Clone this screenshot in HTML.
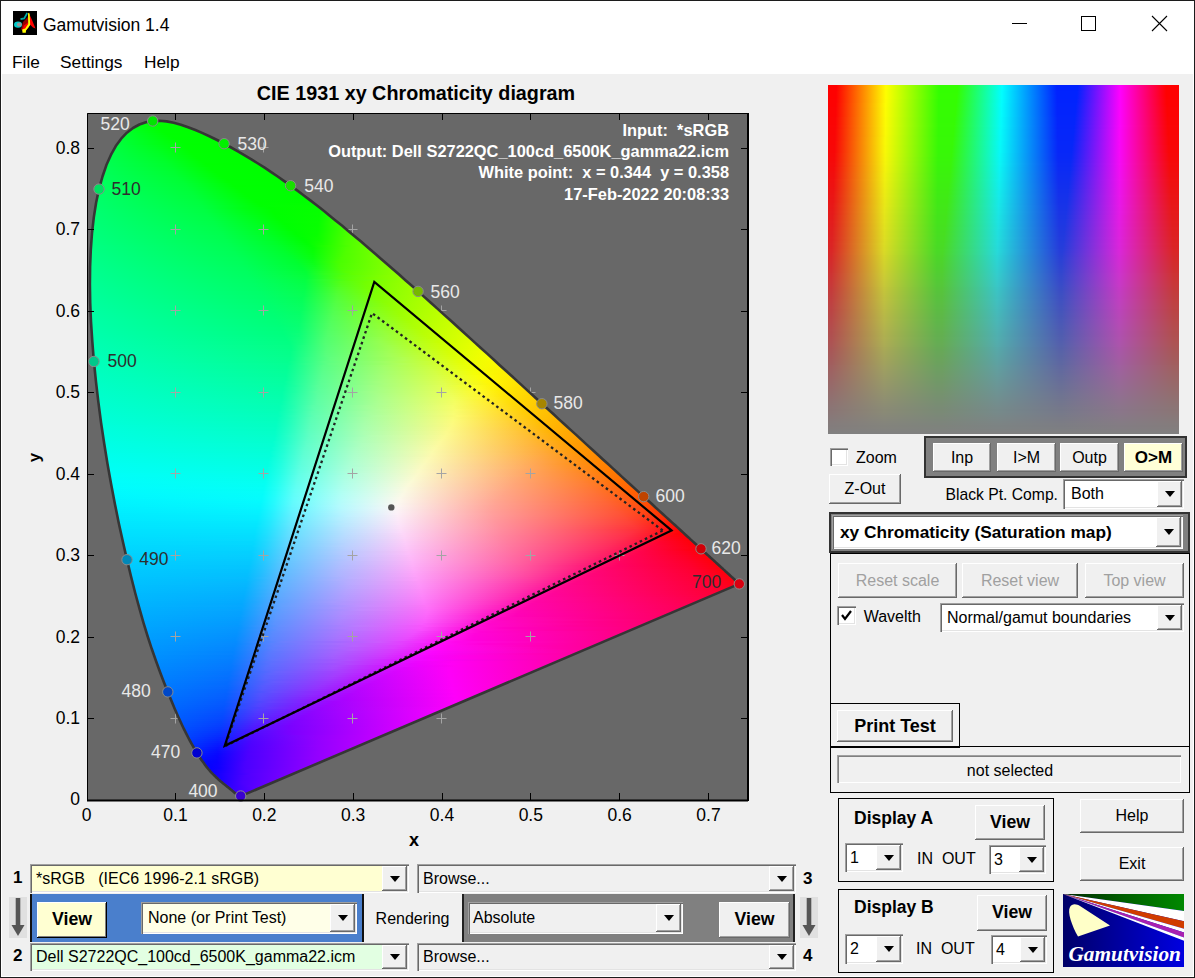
<!DOCTYPE html><html><head><meta charset="utf-8"><style>
*{margin:0;padding:0;box-sizing:border-box}
html,body{width:1195px;height:978px;overflow:hidden;background:#f0f0f0;font-family:"Liberation Sans",sans-serif;position:relative}
div,svg{position:absolute}
.t{white-space:pre;line-height:1.117;color:#000}
.btn{background:#f0f0f0;box-shadow:inset -1px -1px #696969,inset 1px 1px #fff,inset -2px -2px #a0a0a0}
.cmb{box-shadow:inset 1px 1px #a0a0a0,inset 2px 2px #696969,inset -1px -1px #fff,inset -2px -2px #e3e3e3}
.sunk{box-shadow:inset 1px 1px #a0a0a0,inset -1px -1px #fff}
.a{fill:#000}
.frm{border:1px solid #000}
.hs b{position:absolute;display:block;height:2px}
.sw b{position:absolute;display:block;left:0;width:351px}
</style></head><body>
<div class="" style="left:0px;top:0px;width:1195px;height:74px;background:#fff"></div>
<div class="t" style="left:43.0px;top:15.6px;font-size:17.5px;">Gamutvision 1.4</div>
<svg style="left:13px;top:11px" width="24" height="24" viewBox="0 0 24 24"><rect width="24" height="24" fill="#000"/><path d="M8 18.5L10 11L15 6L16 14L12 19.5Z" fill="#900"/><path d="M9 19.5L11 14.5L15 11.5L16 16L12 20.5Z" fill="#f00"/><path d="M15.5 1.5L19 9L22.5 17.5L20 16.5L16.5 13Z" fill="#f00"/><path d="M15 2L16.6 2.5L17.2 14L13 19.5L12.8 21.8L9.5 21.8L9.2 18.6L12.2 17.6L15.2 13Z" fill="#ff0"/><ellipse cx="5" cy="13.6" rx="4" ry="3.2" fill="#0cc"/><ellipse cx="6.3" cy="13.6" rx="2.4" ry="2" fill="#999"/><path d="M7.5 8.2L11.2 7.4L14.2 2" stroke="#0aa" stroke-width="1.7" fill="none"/></svg>
<div class="" style="left:1012px;top:23px;width:15px;height:1px;background:#000"></div>
<div class="" style="left:1081px;top:16px;width:15px;height:15px;border:1px solid #000"></div>
<svg style="left:1151px;top:15px" width="17" height="17"><path d="M1 1L16 16M16 1L1 16" stroke="#000" stroke-width="1.1"/></svg>
<div class="t" style="left:12.0px;top:52.8px;font-size:17.3px;">File</div>
<div class="t" style="left:60.0px;top:52.8px;font-size:17.3px;">Settings</div>
<div class="t" style="left:144.0px;top:52.8px;font-size:17.3px;">Help</div>
<div style="left:87px;top:113px;width:662px;height:688px;background:#686868"></div>
<svg style="left:0;top:0" width="1195" height="978"><path d="M258.5 147.5h10M263.5 142.5v10M347.5 229.5h10M352.5 224.5v10M436.5 310.5h10M441.5 305.5v10M525.5 392.5h10M530.5 387.5v10M436.5 718.5h10M441.5 713.5v10M170.5 718.5h10M175.5 713.5v10" stroke="#a4a4a4" stroke-width="1" fill="none"/></svg>
<div class="hs" style="left:0;top:0;width:1195px;height:978px;clip-path:path('M241.3 795.9 L241.3 795.9 L241.3 795.9 L241.3 795.9 L241.3 795.9 L241.2 795.9 L241.2 795.9 L241.2 795.9 L241.1 795.9 L241.1 795.9 L241.1 795.9 L241.0 795.9 L241.0 795.9 L240.9 795.9 L240.9 795.9 L240.8 795.9 L240.8 795.9 L240.8 796.0 L240.7 796.0 L240.7 796.0 L240.7 796.0 L240.6 796.0 L240.6 796.0 L240.5 796.0 L240.4 796.0 L240.4 796.0 L240.3 796.0 L240.2 796.0 L240.1 796.0 L240.1 796.0 L240.0 796.0 L239.9 796.0 L239.8 796.0 L239.7 796.0 L239.6 796.0 L239.5 796.0 L239.4 796.0 L239.3 795.9 L239.2 795.9 L239.1 795.9 L238.9 795.8 L238.8 795.7 L238.6 795.6 L238.4 795.5 L238.2 795.4 L238.0 795.2 L237.7 795.1 L237.5 794.9 L237.2 794.7 L237.0 794.5 L236.7 794.3 L236.4 794.1 L236.0 793.8 L235.7 793.6 L235.3 793.3 L234.9 793.0 L234.5 792.6 L234.1 792.3 L233.7 791.9 L233.2 791.5 L232.7 791.1 L232.2 790.7 L231.7 790.2 L231.1 789.7 L230.4 789.2 L229.8 788.7 L229.1 788.1 L228.3 787.5 L227.5 786.9 L226.7 786.2 L225.8 785.5 L224.9 784.8 L223.9 784.0 L222.9 783.2 L221.9 782.3 L220.8 781.4 L219.6 780.4 L218.4 779.4 L217.2 778.2 L215.9 777.0 L214.6 775.7 L213.2 774.4 L211.7 772.9 L210.3 771.3 L208.7 769.5 L207.0 767.5 L205.3 765.2 L203.4 762.6 L201.3 759.7 L199.2 756.4 L196.9 752.9 L194.6 749.0 L192.1 744.7 L189.5 740.0 L186.9 734.9 L184.0 729.2 L181.1 723.0 L178.0 716.2 L174.7 708.7 L171.3 700.6 L167.8 691.9 L164.0 682.4 L160.1 672.2 L156.1 661.2 L151.9 649.3 L147.7 636.5 L143.5 622.8 L139.4 608.4 L135.2 593.0 L131.1 576.8 L127.0 559.7 L122.9 541.8 L118.8 523.2 L114.9 503.9 L111.1 484.0 L107.5 463.9 L104.2 443.5 L101.1 423.0 L98.4 402.4 L96.0 381.9 L93.9 361.5 L92.3 341.4 L91.0 321.8 L90.2 302.8 L89.9 284.5 L90.1 266.7 L90.8 249.6 L92.0 233.1 L93.8 217.4 L96.1 202.7 L99.0 189.1 L102.5 176.5 L106.4 165.1 L110.9 154.9 L115.8 146.1 L121.2 138.7 L126.9 132.7 L133.0 128.0 L139.4 124.5 L145.9 122.2 L152.7 121.0 L159.6 120.7 L166.6 121.4 L173.7 122.8 L180.9 124.7 L188.1 127.2 L195.4 130.0 L202.6 133.1 L209.9 136.5 L217.1 140.0 L224.1 143.7 L231.1 147.5 L237.9 151.3 L244.7 155.3 L251.4 159.3 L258.0 163.5 L264.6 167.7 L271.2 172.1 L277.7 176.5 L284.2 181.1 L290.6 185.7 L297.1 190.4 L303.5 195.2 L310.0 200.1 L316.4 205.1 L322.8 210.1 L329.1 215.2 L335.5 220.4 L341.9 225.6 L348.2 230.9 L354.6 236.2 L361.0 241.6 L367.3 247.0 L373.7 252.4 L380.0 257.9 L386.4 263.4 L392.7 269.0 L399.1 274.6 L405.4 280.2 L411.8 285.8 L418.1 291.4 L424.5 297.1 L430.8 302.8 L437.1 308.4 L443.4 314.1 L449.8 319.8 L456.1 325.5 L462.4 331.2 L468.6 336.9 L474.9 342.6 L481.1 348.2 L487.4 353.9 L493.6 359.5 L499.7 365.2 L505.9 370.8 L512.0 376.3 L518.1 381.9 L524.1 387.4 L530.1 392.9 L536.0 398.3 L541.9 403.7 L547.8 409.0 L553.6 414.3 L559.3 419.6 L565.0 424.8 L570.6 429.9 L576.2 434.9 L581.6 439.9 L587.0 444.9 L592.4 449.7 L597.6 454.5 L602.7 459.2 L607.8 463.8 L612.8 468.4 L617.6 472.8 L622.3 477.1 L626.8 481.2 L631.2 485.2 L635.5 489.1 L639.6 492.9 L643.7 496.6 L647.7 500.3 L651.6 503.8 L655.3 507.3 L659.0 510.6 L662.5 513.8 L665.9 516.9 L669.1 519.8 L672.2 522.6 L675.2 525.3 L678.1 527.9 L680.9 530.5 L683.5 532.9 L686.0 535.2 L688.5 537.4 L690.8 539.6 L693.0 541.6 L695.1 543.5 L697.2 545.4 L699.1 547.2 L701.0 548.8 L702.7 550.5 L704.4 552.0 L706.0 553.5 L707.6 554.9 L709.0 556.2 L710.4 557.5 L711.8 558.7 L713.1 559.9 L714.3 561.0 L715.5 562.1 L716.7 563.2 L717.8 564.2 L718.9 565.2 L720.0 566.2 L721.0 567.1 L721.9 568.0 L722.9 568.8 L723.7 569.6 L724.6 570.4 L725.4 571.2 L726.2 571.9 L726.9 572.6 L727.6 573.2 L728.3 573.8 L729.0 574.4 L729.6 575.0 L730.1 575.5 L730.6 575.9 L731.1 576.4 L731.6 576.8 L732.0 577.2 L732.5 577.6 L732.9 578.0 L733.3 578.3 L733.6 578.7 L734.0 579.0 L734.3 579.3 L734.6 579.6 L734.9 579.8 L735.1 580.0 L735.4 580.3 L735.6 580.5 L735.8 580.6 L735.9 580.8 L736.1 581.0 L736.3 581.1 L736.5 581.3 L736.6 581.4 L736.8 581.6 L736.9 581.7 L737.1 581.8 L737.2 581.9 L737.3 582.1 L737.4 582.2 L737.6 582.3 L737.7 582.4 L737.8 582.5 L737.9 582.6 L738.1 582.7 L738.2 582.9 L738.3 583.0 L738.4 583.1 L738.5 583.2 L738.6 583.3 L738.7 583.4 L738.8 583.4 L738.9 583.5 L739.0 583.6 L739.0 583.6 L739.1 583.6 L739.1 583.7 L739.1 583.7 L739.2 583.8 L739.2 583.8 L739.2 583.8 L739.3 583.8 L739.3 583.9 L739.3 583.9 L739.3 583.9 L739.3 583.9 Z')"><b style="top:119px;left:150px;width:16px;background:linear-gradient(90deg,#00ff02 0px,#00ff00 15px)"></b><b style="top:121px;left:141px;width:37px;background:linear-gradient(90deg,#00ff08 0px,#00ff00 35px,#00ff00 36px)"></b><b style="top:123px;left:136px;width:49px;background:linear-gradient(90deg,#00ff10 0px,#00ff00 31px,#00ff00 48px)"></b><b style="top:125px;left:132px;width:59px;background:linear-gradient(90deg,#00ff18 0px,#00ff01 29px,#00ff00 58px)"></b><b style="top:127px;left:129px;width:67px;background:linear-gradient(90deg,#00ff20 0px,#00ff02 31px,#00ff00 66px)"></b><b style="top:129px;left:127px;width:74px;background:linear-gradient(90deg,#00ff25 0px,#00ff02 35px,#00ff00 72px,#00ff00 73px)"></b><b style="top:131px;left:124px;width:82px;background:linear-gradient(90deg,#00ff2b 0px,#00ff03 39px,#00ff00 80px,#00ff00 81px)"></b><b style="top:133px;left:122px;width:88px;background:linear-gradient(90deg,#00ff30 0px,#00ff02 45px,#00ff00 86px,#00ff00 87px)"></b><b style="top:135px;left:120px;width:94px;background:linear-gradient(90deg,#00ff34 0px,#00ff03 49px,#00ff00 92px,#00ff00 93px)"></b><b style="top:137px;left:118px;width:100px;background:linear-gradient(90deg,#00ff37 0px,#00ff02 55px,#00ff00 98px,#00ff00 99px)"></b><b style="top:139px;left:117px;width:105px;background:linear-gradient(90deg,#00ff3a 0px,#00ff02 59px,#00ff00 104px)"></b><b style="top:141px;left:116px;width:110px;background:linear-gradient(90deg,#00ff3c 0px,#00ff02 63px,#00ff00 108px,#00ff00 109px)"></b><b style="top:143px;left:114px;width:116px;background:linear-gradient(90deg,#00ff3f 0px,#00ff17 43px,#00ff01 72px,#00ff00 115px)"></b><b style="top:145px;left:113px;width:121px;background:linear-gradient(90deg,#00ff42 0px,#00ff1c 43px,#00ff02 72px,#00ff00 119px,#00ff00 120px)"></b><b style="top:147px;left:112px;width:125px;background:linear-gradient(90deg,#00ff44 0px,#00ff1e 45px,#00ff02 74px,#00ff00 123px,#00ff00 124px)"></b><b style="top:149px;left:111px;width:130px;background:linear-gradient(90deg,#00ff46 0px,#00ff20 47px,#00ff02 78px,#00ff00 129px)"></b><b style="top:151px;left:109px;width:135px;background:linear-gradient(90deg,#00ff48 0px,#00ff23 49px,#00ff02 82px,#00ff00 133px,#00ff00 134px)"></b><b style="top:153px;left:108px;width:140px;background:linear-gradient(90deg,#00ff4a 0px,#00ff25 51px,#00ff03 84px,#00ff00 139px)"></b><b style="top:155px;left:107px;width:144px;background:linear-gradient(90deg,#00ff4c 0px,#00ff25 55px,#00ff03 88px,#00ff00 143px)"></b><b style="top:157px;left:107px;width:147px;background:linear-gradient(90deg,#00ff4d 0px,#00ff28 55px,#00ff03 90px,#00ff00 145px,#00ff00 146px)"></b><b style="top:159px;left:106px;width:152px;background:linear-gradient(90deg,#00ff4f 0px,#00ff28 59px,#00ff03 94px,#00ff00 151px)"></b><b style="top:161px;left:105px;width:156px;background:linear-gradient(90deg,#00ff51 0px,#00ff2a 61px,#00ff03 98px,#00ff00 155px)"></b><b style="top:163px;left:104px;width:160px;background:linear-gradient(90deg,#00ff53 0px,#00ff2c 63px,#00ff02 102px,#00ff00 159px)"></b><b style="top:165px;left:103px;width:164px;background:linear-gradient(90deg,#00ff54 0px,#00ff2b 67px,#00ff03 104px,#00ff00 163px)"></b><b style="top:167px;left:103px;width:167px;background:linear-gradient(90deg,#00ff56 0px,#00ff2e 67px,#00ff03 108px,#00ff00 165px,#00ff00 166px)"></b><b style="top:169px;left:102px;width:171px;background:linear-gradient(90deg,#00ff57 0px,#00ff2e 71px,#00ff03 110px,#00ff00 169px,#00ff00 170px)"></b><b style="top:171px;left:101px;width:175px;background:linear-gradient(90deg,#00ff59 0px,#00ff30 73px,#00ff03 114px,#00ff00 173px,#00ff00 174px)"></b><b style="top:173px;left:100px;width:179px;background:linear-gradient(90deg,#00ff5a 0px,#00ff31 75px,#00ff03 118px,#00ff00 177px,#00ff00 178px)"></b><b style="top:175px;left:100px;width:182px;background:linear-gradient(90deg,#00ff5c 0px,#00ff32 77px,#00ff03 120px,#00ff00 181px)"></b><b style="top:177px;left:99px;width:186px;background:linear-gradient(90deg,#00ff5d 0px,#00ff34 79px,#00ff03 124px,#00ff00 185px)"></b><b style="top:179px;left:99px;width:189px;background:linear-gradient(90deg,#00ff5e 0px,#00ff34 81px,#00ff02 128px,#00ff00 187px,#00ff00 188px)"></b><b style="top:181px;left:98px;width:192px;background:linear-gradient(90deg,#00ff60 0px,#00ff34 85px,#00ff03 130px,#00ff00 191px)"></b><b style="top:183px;left:98px;width:195px;background:linear-gradient(90deg,#00ff61 0px,#00ff35 87px,#00ff03 134px,#00ff00 193px,#00ff00 194px)"></b><b style="top:185px;left:97px;width:199px;background:linear-gradient(90deg,#00ff62 0px,#00ff36 89px,#00ff02 138px,#00ff00 197px,#00ff00 198px)"></b><b style="top:187px;left:97px;width:202px;background:linear-gradient(90deg,#00ff64 0px,#00ff37 91px,#00ff03 140px,#00ff00 201px)"></b><b style="top:189px;left:96px;width:205px;background:linear-gradient(90deg,#00ff65 0px,#00ff38 93px,#00ff03 144px,#00ff00 203px,#00ff00 204px)"></b><b style="top:191px;left:96px;width:208px;background:linear-gradient(90deg,#00ff66 0px,#00ff39 95px,#00ff03 146px,#00ff00 207px)"></b><b style="top:193px;left:95px;width:212px;background:linear-gradient(90deg,#00ff67 0px,#00ff3a 97px,#00ff03 150px,#00ff00 211px)"></b><b style="top:195px;left:95px;width:214px;background:linear-gradient(90deg,#00ff69 0px,#00ff3b 99px,#00ff03 152px,#00ff00 213px)"></b><b style="top:197px;left:94px;width:218px;background:linear-gradient(90deg,#00ff6a 0px,#00ff3c 101px,#00ff03 156px,#00ff00 217px)"></b><b style="top:199px;left:94px;width:221px;background:linear-gradient(90deg,#00ff6b 0px,#00ff3d 103px,#00ff02 160px,#01ff00 219px,#01ff00 220px)"></b><b style="top:201px;left:94px;width:223px;background:linear-gradient(90deg,#00ff6c 0px,#00ff3e 105px,#00ff02 162px,#01ff00 221px,#02ff00 222px)"></b><b style="top:203px;left:93px;width:227px;background:linear-gradient(90deg,#00ff6d 0px,#00ff3f 107px,#00ff02 166px,#03ff00 225px,#04ff00 226px)"></b><b style="top:205px;left:93px;width:229px;background:linear-gradient(90deg,#00ff6e 0px,#00ff40 109px,#00ff03 168px,#05ff00 227px,#06ff00 228px)"></b><b style="top:207px;left:93px;width:232px;background:linear-gradient(90deg,#00ff6f 0px,#00ff42 109px,#00ff15 150px,#00ff01 177px,#07ff00 228px,#0bff00 231px)"></b><b style="top:209px;left:92px;width:235px;background:linear-gradient(90deg,#00ff71 0px,#00ff42 113px,#00ff15 154px,#00ff01 181px,#06ff00 228px,#0eff00 233px,#10ff00 234px)"></b><b style="top:211px;left:92px;width:238px;background:linear-gradient(90deg,#00ff72 0px,#00ff43 113px,#00ff18 154px,#00ff01 181px,#06ff00 228px,#18ff00 237px)"></b><b style="top:213px;left:92px;width:240px;background:linear-gradient(90deg,#00ff73 0px,#00ff44 115px,#00ff19 156px,#00ff01 183px,#07ff00 228px,#1fff00 239px)"></b><b style="top:215px;left:91px;width:244px;background:linear-gradient(90deg,#00ff74 0px,#00ff45 117px,#00ff1c 158px,#00ff02 185px,#06ff00 228px,#28ff00 243px)"></b><b style="top:217px;left:91px;width:246px;background:linear-gradient(90deg,#00ff75 0px,#00ff46 119px,#00ff1d 160px,#00ff02 187px,#07ff00 228px,#2eff00 245px)"></b><b style="top:219px;left:91px;width:249px;background:linear-gradient(90deg,#00ff76 0px,#00ff46 121px,#00ff1e 162px,#00ff02 189px,#07ff00 228px,#34ff00 247px,#36ff00 248px)"></b><b style="top:221px;left:91px;width:251px;background:linear-gradient(90deg,#00ff77 0px,#00ff47 123px,#00ff1f 164px,#00ff03 191px,#08ff00 228px,#39ff00 249px,#3bff00 250px)"></b><b style="top:223px;left:90px;width:255px;background:linear-gradient(90deg,#00ff78 0px,#00ff48 125px,#00ff21 166px,#00ff02 195px,#07ff00 228px,#40ff00 253px,#42ff00 254px)"></b><b style="top:225px;left:90px;width:257px;background:linear-gradient(90deg,#00ff79 0px,#00ff4a 125px,#00ff22 168px,#00ff03 197px,#07ff00 228px,#44ff00 255px,#46ff00 256px)"></b><b style="top:227px;left:90px;width:259px;background:linear-gradient(90deg,#00ff7a 0px,#00ff4b 127px,#00ff23 170px,#00ff03 199px,#08ff00 228px,#48ff00 257px,#4aff00 258px)"></b><b style="top:229px;left:90px;width:262px;background:linear-gradient(90deg,#00ff7b 0px,#00ff4b 129px,#00ff24 172px,#00ff03 201px,#08ff00 228px,#4cff00 259px,#4eff00 260px,#4fff00 261px)"></b><b style="top:231px;left:90px;width:264px;background:linear-gradient(90deg,#00ff7c 0px,#00ff4c 131px,#00ff25 174px,#00ff03 205px,#09ff00 228px,#4dff00 259px,#51ff00 262px,#53ff00 263px)"></b><b style="top:233px;left:89px;width:268px;background:linear-gradient(90deg,#00ff7d 0px,#00ff4d 133px,#00ff24 178px,#00ff03 207px,#08ff00 228px,#4cff00 259px,#56ff00 266px,#57ff00 267px)"></b><b style="top:235px;left:89px;width:270px;background:linear-gradient(90deg,#00ff7e 0px,#00ff4f 133px,#00ff28 178px,#00ff04 209px,#09ff00 228px,#4dff00 259px,#59ff00 268px,#5aff00 269px)"></b><b style="top:237px;left:89px;width:272px;background:linear-gradient(90deg,#00ff7f 0px,#00ff4f 135px,#00ff29 180px,#00ff03 213px,#0dff00 230px,#4bff00 257px,#5cff00 270px,#5dff00 271px)"></b><b style="top:239px;left:89px;width:275px;background:linear-gradient(90deg,#00ff80 0px,#00ff50 137px,#00ff27 184px,#00ff03 215px,#0eff00 230px,#4bff00 257px,#61ff00 274px)"></b><b style="top:241px;left:89px;width:277px;background:linear-gradient(90deg,#00ff81 0px,#00ff51 137px,#00ff2b 184px,#01ff03 217px,#13ff00 232px,#4cff00 257px,#64ff00 276px)"></b><b style="top:243px;left:89px;width:279px;background:linear-gradient(90deg,#00ff82 0px,#00ff52 139px,#00ff29 188px,#02ff04 219px,#19ff00 234px,#4dff00 257px,#67ff00 278px)"></b><b style="top:245px;left:88px;width:283px;background:linear-gradient(90deg,#00ff84 0px,#00ff53 141px,#00ff2c 190px,#04ff04 223px,#28ff00 240px,#57ff00 265px,#6bff00 282px)"></b><b style="top:247px;left:88px;width:285px;background:linear-gradient(90deg,#00ff85 0px,#00ff54 143px,#00ff2d 192px,#06ff04 225px,#4eff00 258px,#6dff00 283px,#6eff00 284px)"></b><b style="top:249px;left:88px;width:287px;background:linear-gradient(90deg,#00ff85 0px,#00ff55 143px,#00ff2d 194px,#07ff06 225px,#4fff00 258px,#6fff00 285px,#70ff00 286px)"></b><b style="top:251px;left:88px;width:290px;background:linear-gradient(90deg,#00ff86 0px,#00ff56 145px,#00ff2e 196px,#08ff07 225px,#50ff00 258px,#74ff00 289px)"></b><b style="top:253px;left:88px;width:292px;background:linear-gradient(90deg,#00ff87 0px,#00ff56 147px,#00ff2f 198px,#08ff0a 225px,#4dff00 256px,#76ff00 291px)"></b><b style="top:255px;left:88px;width:294px;background:linear-gradient(90deg,#00ff88 0px,#00ff57 149px,#00ff2e 202px,#09ff0d 225px,#4eff00 256px,#79ff00 293px)"></b><b style="top:257px;left:88px;width:297px;background:linear-gradient(90deg,#00ff89 0px,#00ff59 149px,#00ff31 202px,#09ff10 225px,#4cff00 254px,#7bff00 295px,#7cff00 296px)"></b><b style="top:259px;left:88px;width:299px;background:linear-gradient(90deg,#00ff8a 0px,#00ff59 151px,#00ff30 206px,#0aff14 225px,#49ff01 252px,#7eff00 297px,#7fff00 298px)"></b><b style="top:261px;left:88px;width:301px;background:linear-gradient(90deg,#00ff8b 0px,#00ff5a 153px,#00ff30 208px,#0bff17 225px,#47ff01 250px,#80ff00 299px,#81ff00 300px)"></b><b style="top:263px;left:88px;width:304px;background:linear-gradient(90deg,#00ff8c 0px,#00ff5b 153px,#00ff31 210px,#0fff18 227px,#4bff02 252px,#84ff00 303px)"></b><b style="top:265px;left:88px;width:306px;background:linear-gradient(90deg,#00ff8d 0px,#00ff5c 155px,#01ff32 212px,#10ff1d 227px,#4cff02 252px,#87ff00 305px)"></b><b style="top:267px;left:88px;width:308px;background:linear-gradient(90deg,#00ff8e 0px,#00ff5e 155px,#01ff33 214px,#16ff1e 229px,#4cff04 252px,#89ff00 307px)"></b><b style="top:269px;left:88px;width:310px;background:linear-gradient(90deg,#00ff8f 0px,#00ff5e 157px,#02ff34 216px,#1dff1f 231px,#50ff04 254px,#8cff00 309px)"></b><b style="top:271px;left:88px;width:313px;background:linear-gradient(90deg,#00ff90 0px,#00ff5f 159px,#04ff35 218px,#29ff1d 235px,#57ff03 258px,#8eff00 311px,#8fff00 312px)"></b><b style="top:273px;left:88px;width:315px;background:linear-gradient(90deg,#00ff91 0px,#00ff60 159px,#04ff38 218px,#30ff1e 237px,#5fff02 264px,#90ff00 313px,#91ff00 314px)"></b><b style="top:275px;left:87px;width:318px;background:linear-gradient(90deg,#00ff92 0px,#00ff61 161px,#06ff3a 220px,#52ff0a 255px,#81ff00 296px,#93ff00 317px)"></b><b style="top:277px;left:87px;width:321px;background:linear-gradient(90deg,#00ff93 0px,#00ff62 163px,#06ff3d 220px,#50ff0f 253px,#74ff00 282px,#96ff00 319px,#97ff00 320px)"></b><b style="top:279px;left:87px;width:323px;background:linear-gradient(90deg,#00ff94 0px,#00ff63 165px,#05ff42 218px,#30ff2c 237px,#60ff07 264px,#98ff00 321px,#99ff00 322px)"></b><b style="top:281px;left:87px;width:325px;background:linear-gradient(90deg,#00ff95 0px,#00ff64 165px,#05ff44 218px,#52ff17 253px,#71ff01 278px,#9aff00 323px,#9bff00 324px)"></b><b style="top:283px;left:87px;width:327px;background:linear-gradient(90deg,#00ff96 0px,#00ff65 167px,#05ff47 218px,#52ff1b 253px,#72ff02 278px,#9dff00 325px,#9dff00 326px)"></b><b style="top:285px;left:87px;width:330px;background:linear-gradient(90deg,#00ff97 0px,#00ff66 167px,#06ff49 218px,#53ff1f 253px,#74ff02 280px,#a1ff00 329px)"></b><b style="top:287px;left:87px;width:332px;background:linear-gradient(90deg,#00ff98 0px,#00ff67 169px,#06ff4b 218px,#51ff27 251px,#75ff03 280px,#a3ff00 331px)"></b><b style="top:289px;left:87px;width:334px;background:linear-gradient(90deg,#00ff99 0px,#00ff67 171px,#07ff4d 218px,#52ff2b 251px,#78ff04 282px,#a5ff00 333px)"></b><b style="top:291px;left:88px;width:335px;background:linear-gradient(90deg,#00ff99 0px,#00ff69 171px,#06ff50 216px,#54ff2e 251px,#79ff04 282px,#a7ff00 333px,#a7ff00 334px)"></b><b style="top:293px;left:88px;width:338px;background:linear-gradient(90deg,#00ff9a 0px,#00ff69 173px,#07ff52 216px,#52ff34 249px,#7cff05 284px,#aaff00 337px)"></b><b style="top:295px;left:88px;width:340px;background:linear-gradient(90deg,#00ff9b 0px,#00ff6b 173px,#07ff54 216px,#52ff38 249px,#81ff04 288px,#adff00 339px)"></b><b style="top:297px;left:88px;width:342px;background:linear-gradient(90deg,#00ff9c 0px,#00ff6b 175px,#05ff57 214px,#53ff3b 249px,#83ff04 290px,#afff00 341px)"></b><b style="top:299px;left:88px;width:344px;background:linear-gradient(90deg,#00ff9d 0px,#00ff6d 175px,#06ff59 214px,#54ff3e 249px,#86ff05 292px,#b1ff00 343px)"></b><b style="top:301px;left:88px;width:347px;background:linear-gradient(90deg,#00ff9e 0px,#00ff6d 177px,#06ff5b 214px,#55ff41 249px,#8aff04 296px,#b4ff00 345px,#b4ff00 346px)"></b><b style="top:303px;left:88px;width:349px;background:linear-gradient(90deg,#00ff9f 0px,#00ff6e 179px,#07ff5d 214px,#52ff46 247px,#8fff03 300px,#b6ff00 347px,#b7ff00 348px)"></b><b style="top:305px;left:88px;width:351px;background:linear-gradient(90deg,#00ffa0 0px,#00ff70 179px,#07ff5f 214px,#53ff48 247px,#91ff04 302px,#b8ff00 349px,#b9ff00 350px)"></b><b style="top:307px;left:88px;width:353px;background:linear-gradient(90deg,#00ffa1 0px,#00ff70 181px,#08ff61 214px,#54ff4b 247px,#81ff1b 284px,#98ff02 309px,#bbff00 352px)"></b><b style="top:309px;left:88px;width:355px;background:linear-gradient(90deg,#00ffa2 0px,#00ff72 181px,#08ff62 214px,#51ff4f 245px,#7fff23 282px,#97ff04 307px,#beff00 354px)"></b><b style="top:311px;left:88px;width:358px;background:linear-gradient(90deg,#00ffa3 0px,#00ff72 183px,#06ff65 212px,#55ff50 247px,#82ff24 284px,#9bff03 311px,#c0ff00 356px,#c1ff00 357px)"></b><b style="top:313px;left:88px;width:360px;background:linear-gradient(90deg,#00ffa4 0px,#00ff73 185px,#06ff67 212px,#53ff53 245px,#83ff29 284px,#9cff04 311px,#c2ff00 358px,#c3ff00 359px)"></b><b style="top:315px;left:88px;width:362px;background:linear-gradient(90deg,#00ffa5 0px,#00ff74 185px,#07ff69 212px,#54ff56 245px,#83ff2d 284px,#9eff05 313px,#c5ff00 360px,#c5ff00 361px)"></b><b style="top:317px;left:88px;width:364px;background:linear-gradient(90deg,#00ffa6 0px,#00ff75 187px,#08ff6a 212px,#55ff58 245px,#86ff2e 286px,#a3ff04 317px,#c7ff00 362px,#c8ff00 363px)"></b><b style="top:319px;left:88px;width:367px;background:linear-gradient(90deg,#00ffa7 0px,#00ff77 187px,#08ff6c 212px,#52ff5b 243px,#87ff33 286px,#a5ff04 319px,#cbff00 366px)"></b><b style="top:321px;left:88px;width:369px;background:linear-gradient(90deg,#00ffa8 0px,#00ff77 189px,#09ff6d 212px,#53ff5d 243px,#89ff34 288px,#a7ff05 321px,#cdff00 368px)"></b><b style="top:323px;left:89px;width:370px;background:linear-gradient(90deg,#00ffa8 0px,#00ff78 189px,#08ff70 210px,#52ff60 241px,#8bff36 288px,#abff05 323px,#cfff00 368px,#d0ff00 369px)"></b><b style="top:325px;left:89px;width:372px;background:linear-gradient(90deg,#00ffa9 0px,#00ff79 191px,#08ff71 210px,#53ff61 241px,#8eff37 290px,#adff05 325px,#d1ff00 370px,#d2ff00 371px)"></b><b style="top:327px;left:89px;width:374px;background:linear-gradient(90deg,#00ffaa 0px,#00ff7b 191px,#09ff73 210px,#54ff63 241px,#90ff38 292px,#b0ff05 327px,#d4ff00 372px,#d4ff00 373px)"></b><b style="top:329px;left:89px;width:377px;background:linear-gradient(90deg,#00ffab 0px,#00ff7b 193px,#0aff74 210px,#51ff66 239px,#91ff3c 292px,#b4ff05 331px,#d8ff00 376px)"></b><b style="top:331px;left:89px;width:379px;background:linear-gradient(90deg,#00ffac 0px,#00ff7d 193px,#0aff76 210px,#52ff68 239px,#94ff3d 294px,#b6ff05 333px,#daff00 378px)"></b><b style="top:333px;left:89px;width:381px;background:linear-gradient(90deg,#00ffad 0px,#00ff7d 195px,#0fff77 212px,#53ff6a 239px,#96ff3e 296px,#b9ff05 335px,#dcff00 380px)"></b><b style="top:335px;left:89px;width:383px;background:linear-gradient(90deg,#00ffae 0px,#00ff7f 195px,#0cff79 210px,#54ff6c 239px,#99ff3f 298px,#bbff06 337px,#dfff00 382px)"></b><b style="top:337px;left:89px;width:385px;background:linear-gradient(90deg,#00ffaf 0px,#01ff80 197px,#11ff7a 212px,#51ff6f 237px,#94ff49 292px,#bfff05 341px,#e1ff00 384px)"></b><b style="top:339px;left:90px;width:387px;background:linear-gradient(90deg,#00ffb0 0px,#01ff81 197px,#15ff7b 212px,#50ff71 235px,#94ff4d 290px,#b5ff17 327px,#c8ff02 350px,#e4ff00 385px,#e5ff00 386px)"></b><b style="top:341px;left:90px;width:389px;background:linear-gradient(90deg,#00ffb1 0px,#02ff82 199px,#16ff7c 212px,#51ff72 235px,#95ff50 290px,#b4ff20 325px,#c7ff03 348px,#e6ff00 387px,#e7ff00 388px)"></b><b style="top:343px;left:90px;width:391px;background:linear-gradient(90deg,#00ffb2 0px,#02ff83 199px,#17ff7e 212px,#52ff74 235px,#97ff51 292px,#b7ff21 327px,#ccff03 352px,#e9ff00 389px,#eaff00 390px)"></b><b style="top:345px;left:90px;width:393px;background:linear-gradient(90deg,#00ffb3 0px,#04ff84 201px,#24ff7e 216px,#56ff75 237px,#9eff4e 298px,#bdff1b 333px,#d0ff02 356px,#ecff00 391px,#ecff00 392px)"></b><b style="top:347px;left:90px;width:395px;background:linear-gradient(90deg,#00ffb4 0px,#04ff85 201px,#25ff80 216px,#57ff77 237px,#a0ff4f 300px,#bfff1c 335px,#d2ff02 358px,#eeff00 393px,#efff00 394px)"></b><b style="top:349px;left:90px;width:398px;background:linear-gradient(90deg,#00ffb5 0px,#04ff87 201px,#26ff81 216px,#58ff78 237px,#a1ff52 300px,#beff25 333px,#d3ff04 358px,#f2ff00 397px)"></b><b style="top:351px;left:91px;width:399px;background:linear-gradient(90deg,#00ffb6 0px,#04ff89 199px,#25ff83 214px,#57ff7a 235px,#9fff57 296px,#beff2c 331px,#d5ff05 358px,#f4ff00 397px,#f5ff00 398px)"></b><b style="top:353px;left:91px;width:401px;background:linear-gradient(90deg,#00ffb7 0px,#04ff8a 199px,#26ff85 214px,#58ff7c 235px,#a2ff58 298px,#c1ff2d 333px,#d7ff05 360px,#f6fe00 399px,#f7fe00 400px)"></b><b style="top:355px;left:91px;width:403px;background:linear-gradient(90deg,#00ffb8 0px,#05ff8b 199px,#27ff86 214px,#59ff7e 235px,#a3ff5a 298px,#c2ff32 333px,#daff05 362px,#f8fe00 401px,#f9fe00 402px)"></b><b style="top:357px;left:91px;width:405px;background:linear-gradient(90deg,#00ffb9 0px,#05ff8d 199px,#2fff87 216px,#60ff7e 239px,#b0ff51 312px,#cdff21 345px,#e0ff03 368px,#fafd00 403px,#fbfd00 404px)"></b><b style="top:359px;left:91px;width:408px;background:linear-gradient(90deg,#00ffba 0px,#05ff8e 199px,#30ff88 216px,#61ff7f 239px,#b1ff54 312px,#ceff26 345px,#e3ff04 370px,#fdfb00 407px)"></b><b style="top:361px;left:91px;width:410px;background:linear-gradient(90deg,#00ffbb 0px,#04ff90 197px,#25ff8b 212px,#58ff84 233px,#a1ff64 294px,#c8ff39 337px,#e4ff05 370px,#fef900 409px)"></b><b style="top:363px;left:92px;width:411px;background:linear-gradient(90deg,#00ffbc 0px,#05ff92 197px,#30ff8c 214px,#61ff83 237px,#b2ff5a 310px,#d1ff2e 345px,#e7ff05 372px,#fef800 409px,#fef700 410px)"></b><b style="top:365px;left:92px;width:413px;background:linear-gradient(90deg,#00ffbd 0px,#04ff94 195px,#24ff8f 210px,#58ff87 231px,#a2ff69 292px,#ccff3d 339px,#eaff06 374px,#fef600 411px,#fff500 412px)"></b><b style="top:367px;left:92px;width:415px;background:linear-gradient(90deg,#00ffbe 0px,#04ff95 195px,#26ff90 210px,#59ff89 231px,#a3ff6c 292px,#cdff41 339px,#ecff06 376px,#fff300 413px,#fff300 414px)"></b><b style="top:369px;left:92px;width:418px;background:linear-gradient(90deg,#00ffbf 0px,#04ff97 195px,#27ff92 210px,#5aff8a 231px,#a3ff6e 292px,#d0ff43 341px,#efff07 378px,#ffef00 417px)"></b><b style="top:371px;left:92px;width:420px;background:linear-gradient(90deg,#00ffc0 0px,#05ff98 195px,#28ff93 210px,#5bff8c 231px,#a6ff6f 294px,#d3ff44 343px,#f3ff06 382px,#ffed00 419px)"></b><b style="top:373px;left:93px;width:421px;background:linear-gradient(90deg,#00ffc1 0px,#04ff9a 193px,#26ff95 208px,#5aff8e 229px,#a4ff72 290px,#d4ff46 343px,#f5fe07 382px,#ffeb00 419px,#ffea00 420px)"></b><b style="top:375px;left:93px;width:423px;background:linear-gradient(90deg,#00ffc2 0px,#04ff9b 193px,#28ff97 208px,#5bff90 229px,#a5ff75 290px,#d7ff48 345px,#f9fe06 386px,#ffe900 421px,#ffe800 422px)"></b><b style="top:377px;left:93px;width:425px;background:linear-gradient(90deg,#00ffc3 0px,#05ff9d 193px,#29ff98 208px,#5cff91 229px,#a8ff75 292px,#daff49 347px,#fbfd06 388px,#ffe600 423px,#ffe500 424px)"></b><b style="top:379px;left:93px;width:428px;background:linear-gradient(90deg,#00ffc4 0px,#05ff9e 193px,#2aff9a 208px,#5dff93 229px,#a9ff78 292px,#ddff4a 349px,#fcfb07 390px,#ffe200 427px)"></b><b style="top:381px;left:93px;width:430px;background:linear-gradient(90deg,#00ffc5 0px,#04ffa0 191px,#25ff9c 206px,#5aff95 227px,#a4ff7d 286px,#deff4e 349px,#fef806 394px,#ffe000 429px)"></b><b style="top:383px;left:94px;width:431px;background:linear-gradient(90deg,#00ffc6 0px,#05ffa1 191px,#2aff9d 206px,#5dff96 227px,#a9ff7c 290px,#e1ff4e 351px,#fef605 396px,#ffde00 429px,#ffdd00 430px)"></b><b style="top:385px;left:94px;width:433px;background:linear-gradient(90deg,#00ffc7 0px,#04ffa3 189px,#1effa0 202px,#57ff99 223px,#9eff84 278px,#dfff56 347px,#f9fe24 378px,#fff104 401px,#ffdb00 432px)"></b><b style="top:387px;left:94px;width:435px;background:linear-gradient(90deg,#00ffc8 0px,#04ffa5 189px,#26ffa1 204px,#5bff9a 225px,#a5ff83 284px,#e4ff55 351px,#fcfb1d 384px,#ffed03 405px,#ffd800 434px)"></b><b style="top:389px;left:94px;width:438px;background:linear-gradient(90deg,#00ffc9 0px,#04ffa6 189px,#27ffa2 204px,#5cff9c 225px,#a8ff84 286px,#e6ff56 353px,#fdfa23 384px,#ffec04 405px,#ffd600 436px,#ffd500 437px)"></b><b style="top:391px;left:95px;width:439px;background:linear-gradient(90deg,#00ffca 0px,#04ffa8 187px,#1fffa4 200px,#58ff9e 221px,#a0ff8a 276px,#e7ff5a 351px,#fdfa2a 382px,#ffea06 405px,#ffd300 438px)"></b><b style="top:393px;left:95px;width:441px;background:linear-gradient(90deg,#00ffcb 0px,#04ffa9 187px,#27ffa5 202px,#5cff9f 223px,#a7ff89 282px,#ebff59 355px,#fef82b 384px,#ffe706 407px,#ffd100 440px)"></b><b style="top:395px;left:95px;width:443px;background:linear-gradient(90deg,#00ffcc 0px,#04ffab 187px,#28ffa7 202px,#5dffa1 223px,#aaff8a 284px,#eeff5a 357px,#fef62c 386px,#ffe406 409px,#ffce00 442px)"></b><b style="top:397px;left:95px;width:445px;background:linear-gradient(90deg,#00ffcd 0px,#05ffac 187px,#2affa8 202px,#5effa2 223px,#abff8c 284px,#efff5e 357px,#fff532 386px,#ffe207 411px,#ffcc00 444px)"></b><b style="top:399px;left:95px;width:447px;background:linear-gradient(90deg,#00ffce 0px,#05ffae 187px,#2bffaa 202px,#5fffa4 223px,#aeff8d 286px,#f2ff5f 359px,#fff02e 390px,#ffde06 415px,#ffca00 446px)"></b><b style="top:401px;left:96px;width:449px;background:linear-gradient(90deg,#00ffcf 0px,#05ffaf 185px,#29ffac 200px,#5effa6 221px,#abff90 282px,#f4fe61 359px,#ffee31 390px,#ffdc07 415px,#ffc700 448px)"></b><b style="top:403px;left:96px;width:451px;background:linear-gradient(90deg,#00ffd0 0px,#05ffb1 185px,#2affad 200px,#5fffa7 221px,#acff92 282px,#f5fe64 359px,#ffec32 392px,#ffd907 417px,#ffc500 450px)"></b><b style="top:405px;left:96px;width:453px;background:linear-gradient(90deg,#00ffd1 0px,#04ffb3 183px,#1fffb0 196px,#59ffaa 217px,#a1ff99 270px,#f5fe69 357px,#ffea37 392px,#ffd708 419px,#ffc200 452px)"></b><b style="top:407px;left:96px;width:455px;background:linear-gradient(90deg,#00ffd2 0px,#04ffb4 183px,#20ffb1 196px,#5affac 217px,#a4ff9a 272px,#f6fe6b 357px,#ffe838 394px,#ffd307 423px,#ffc000 454px)"></b><b style="top:409px;left:97px;width:456px;background:linear-gradient(90deg,#00ffd3 0px,#05ffb5 183px,#2bffb2 198px,#60ffac 219px,#aeff98 280px,#f9fd6b 359px,#ffe437 396px,#ffd006 425px,#ffbe00 454px,#ffbe00 455px)"></b><b style="top:411px;left:97px;width:459px;background:linear-gradient(90deg,#00ffd4 0px,#04ffb7 181px,#1fffb4 194px,#5affaf 215px,#a2ff9f 268px,#f8fd70 357px,#ffe238 398px,#ffcd07 427px,#ffbb00 458px)"></b><b style="top:413px;left:97px;width:461px;background:linear-gradient(90deg,#00ffd5 0px,#04ffb9 181px,#21ffb6 194px,#5bffb1 215px,#a5ffa0 270px,#f9fd73 357px,#ffdf38 400px,#ffcb07 429px,#ffb900 460px)"></b><b style="top:415px;left:98px;width:462px;background:linear-gradient(90deg,#00ffd6 0px,#05ffba 181px,#2cffb7 196px,#61ffb2 217px,#b0ff9f 278px,#fcfb72 359px,#ffda34 404px,#ffc807 431px,#ffb700 460px,#ffb700 461px)"></b><b style="top:417px;left:98px;width:464px;background:linear-gradient(90deg,#00ffd7 0px,#04ffbc 179px,#20ffb9 192px,#5bffb4 213px,#a4ffa5 266px,#fafc78 355px,#ffd938 404px,#ffc607 433px,#ffb500 462px,#ffb400 463px)"></b><b style="top:419px;left:98px;width:466px;background:linear-gradient(90deg,#00ffd8 0px,#04ffbd 179px,#22ffbb 192px,#5cffb6 213px,#a7ffa6 268px,#fbfc7b 355px,#ffd639 406px,#ffc206 437px,#ffb300 464px,#ffb200 465px)"></b><b style="top:421px;left:98px;width:469px;background:linear-gradient(90deg,#00ffd9 0px,#05ffbf 179px,#23ffbc 192px,#5dffb7 213px,#a8ffa8 268px,#fcfb7d 355px,#ffd43a 408px,#ffc007 439px,#ffaf00 468px)"></b><b style="top:423px;left:99px;width:470px;background:linear-gradient(90deg,#00ffda 0px,#04ffc1 177px,#21ffbe 190px,#5cffb9 211px,#a6ffab 264px,#fcfb80 353px,#ffd039 410px,#ffbd06 441px,#ffae00 468px,#ffad00 469px)"></b><b style="top:425px;left:99px;width:472px;background:linear-gradient(90deg,#00ffdc 0px,#04ffc2 177px,#22ffc0 190px,#5dffbb 211px,#a9ffac 266px,#fcfa82 353px,#ffce39 412px,#ffba07 443px,#ffab00 470px,#ffab00 471px)"></b><b style="top:427px;left:99px;width:474px;background:linear-gradient(90deg,#00ffdd 0px,#05ffc4 177px,#24ffc1 190px,#5effbc 211px,#aaffae 266px,#fcfa86 351px,#ffcb3a 414px,#ffb807 445px,#ffa900 472px,#ffa900 473px)"></b><b style="top:429px;left:100px;width:475px;background:linear-gradient(90deg,#00ffde 0px,#04ffc5 175px,#22ffc3 188px,#5dffbe 209px,#a8ffb0 262px,#fcfa89 349px,#ffc93c 414px,#ffb507 447px,#ffa700 474px)"></b><b style="top:431px;left:100px;width:478px;background:linear-gradient(90deg,#00ffdf 0px,#05ffc7 175px,#23ffc4 188px,#5effc0 209px,#abffb2 264px,#fcfa8d 347px,#ffc73d 416px,#ffb307 449px,#ffa400 476px,#ffa400 477px)"></b><b style="top:433px;left:100px;width:480px;background:linear-gradient(90deg,#00ffe0 0px,#05ffc8 175px,#25ffc6 188px,#5fffc2 209px,#acffb3 264px,#fcfa8f 347px,#ffc33a 420px,#ffb006 453px,#ffa200 478px,#ffa200 479px)"></b><b style="top:435px;left:100px;width:482px;background:linear-gradient(90deg,#00ffe1 0px,#05ffca 175px,#2dffc7 190px,#64ffc3 211px,#b6ffb3 272px,#fcfa93 345px,#ffc13b 422px,#ffad07 455px,#ffa000 480px,#ffa000 481px)"></b><b style="top:437px;left:101px;width:483px;background:linear-gradient(90deg,#00ffe2 0px,#05ffcc 173px,#24ffc9 186px,#5fffc5 207px,#adffb8 262px,#fcfa95 343px,#ffbe3a 424px,#ffaa06 457px,#ff9d00 482px)"></b><b style="top:439px;left:101px;width:485px;background:linear-gradient(90deg,#00ffe3 0px,#05ffcd 173px,#25ffcb 186px,#60ffc7 207px,#aeffb9 262px,#fcfa99 341px,#ffbb3b 426px,#ffa807 459px,#ff9b00 484px)"></b><b style="top:441px;left:101px;width:487px;background:linear-gradient(90deg,#00ffe5 0px,#04ffcf 171px,#20ffcd 184px,#5dffc9 205px,#a8ffbd 256px,#fcfa9d 339px,#ffb93b 428px,#ffa506 463px,#ff9900 486px)"></b><b style="top:443px;left:102px;width:489px;background:linear-gradient(90deg,#00ffe6 0px,#05ffd1 171px,#25ffce 184px,#61ffca 205px,#afffbe 260px,#fcfa9f 337px,#ffb63a 430px,#ffa205 465px,#ff9600 488px)"></b><b style="top:445px;left:102px;width:491px;background:linear-gradient(90deg,#00ffe7 0px,#05ffd2 171px,#2dffd0 186px,#62ffcc 205px,#b0ffbf 260px,#fcfaa3 335px,#ffb33b 432px,#ffa006 467px,#ff9400 490px)"></b><b style="top:447px;left:102px;width:493px;background:linear-gradient(90deg,#00ffe8 0px,#04ffd4 169px,#21ffd2 182px,#5fffce 203px,#aaffc3 254px,#fbfba6 333px,#ffb13c 434px,#ff9e06 469px,#ff9200 492px)"></b><b style="top:449px;left:103px;width:494px;background:linear-gradient(90deg,#00ffe9 0px,#05ffd5 169px,#26ffd3 182px,#5effd0 201px,#aaffc5 252px,#fcfaa9 331px,#ffae3b 436px,#ff9b06 471px,#ff9000 492px,#ff9000 493px)"></b><b style="top:451px;left:103px;width:496px;background:linear-gradient(90deg,#00ffea 0px,#04ffd7 167px,#20ffd5 180px,#5fffd2 201px,#abffc7 252px,#fbfbac 329px,#ffab3b 438px,#ff9906 473px,#ff8e00 494px,#ff8e00 495px)"></b><b style="top:453px;left:103px;width:499px;background:linear-gradient(90deg,#00ffec 0px,#04ffd9 167px,#22ffd7 180px,#60ffd3 201px,#acffc9 252px,#fcfaae 329px,#ffa93c 440px,#ff9505 477px,#ff8b00 498px)"></b><b style="top:455px;left:104px;width:500px;background:linear-gradient(90deg,#00ffed 0px,#05ffda 167px,#27ffd8 180px,#5fffd5 199px,#acffcb 250px,#fcf9b0 327px,#ffa841 438px,#ff9205 479px,#ff8900 498px,#ff8900 499px)"></b><b style="top:457px;left:104px;width:502px;background:linear-gradient(90deg,#00ffee 0px,#04ffdc 165px,#21ffda 178px,#60ffd7 199px,#adffcd 250px,#fcfab4 325px,#ffa846 436px,#ff9005 481px,#ff8700 500px,#ff8600 501px)"></b><b style="top:459px;left:104px;width:504px;background:linear-gradient(90deg,#00ffef 0px,#04ffde 165px,#23ffdc 178px,#61ffd9 199px,#aeffcf 250px,#fcfab7 323px,#ffa84b 434px,#ff8d04 485px,#ff8500 502px,#ff8400 503px)"></b><b style="top:461px;left:105px;width:505px;background:linear-gradient(90deg,#00fff0 0px,#04ffe0 163px,#20ffde 176px,#60ffdb 197px,#aeffd1 248px,#fcfab9 321px,#ffa74f 432px,#ff8a04 487px,#ff8200 504px)"></b><b style="top:463px;left:105px;width:508px;background:linear-gradient(90deg,#00fff2 0px,#04ffe1 163px,#22ffe0 176px,#61ffdc 197px,#afffd3 248px,#fbfabd 319px,#ffa753 430px,#ff9016 473px,#ff8301 498px,#ff7f00 507px)"></b><b style="top:465px;left:105px;width:510px;background:linear-gradient(90deg,#00fff3 0px,#04ffe3 163px,#23ffe1 176px,#5effde 195px,#a8ffd6 242px,#fbfac0 317px,#ffa758 428px,#ff9121 469px,#ff8403 494px,#ff7d00 509px)"></b><b style="top:467px;left:106px;width:511px;background:linear-gradient(90deg,#00fff4 0px,#04ffe5 161px,#21ffe3 174px,#61ffe0 195px,#b0ffd7 246px,#fbfac2 315px,#ffa75b 426px,#ff8f24 469px,#ff8204 494px,#ff7b00 509px,#ff7b00 510px)"></b><b style="top:469px;left:106px;width:513px;background:linear-gradient(90deg,#00fff5 0px,#04ffe6 161px,#23ffe5 174px,#5effe2 193px,#a9ffda 240px,#fbfac6 313px,#ffa65f 424px,#ff8e28 469px,#ff8004 496px,#ff7900 511px,#ff7800 512px)"></b><b style="top:471px;left:106px;width:515px;background:linear-gradient(90deg,#00fff6 0px,#05ffe8 161px,#24ffe6 174px,#5fffe4 193px,#abffdc 240px,#fcfac7 313px,#ffa764 420px,#ff8c2c 469px,#ff7e05 498px,#ff7600 513px,#ff7600 514px)"></b><b style="top:473px;left:107px;width:517px;background:linear-gradient(90deg,#00fff8 0px,#04ffea 159px,#22ffe8 172px,#63ffe6 193px,#b2ffde 244px,#fcf9ca 311px,#ffa868 416px,#ff8a2f 469px,#ff7b04 500px,#ff7300 515px,#ff7300 516px)"></b><b style="top:475px;left:107px;width:519px;background:linear-gradient(90deg,#00fff9 0px,#04ffec 159px,#24ffea 172px,#60ffe8 191px,#acffe1 238px,#fbfacd 309px,#ffa76a 416px,#ff882f 471px,#ff7805 502px,#ff7100 517px,#ff7100 518px)"></b><b style="top:477px;left:107px;width:521px;background:linear-gradient(90deg,#00fefa 0px,#05ffed 159px,#25ffec 172px,#61ffea 191px,#adffe3 238px,#fbfad0 307px,#ffa66e 414px,#ff8630 473px,#ff7605 504px,#ff6f00 519px,#ff6e00 520px)"></b><b style="top:479px;left:108px;width:522px;background:linear-gradient(90deg,#00fefb 0px,#04ffef 157px,#23ffee 170px,#60ffeb 189px,#adffe5 236px,#fbfad3 305px,#ffa772 410px,#ff8432 473px,#ff7305 506px,#ff6c00 521px)"></b><b style="top:481px;left:108px;width:524px;background:linear-gradient(90deg,#00fefc 0px,#05fff1 157px,#25ffef 170px,#61ffed 189px,#aeffe7 236px,#fbfad6 303px,#ffa775 408px,#ff8133 475px,#ff7105 508px,#ff6900 523px)"></b><b style="top:483px;left:108px;width:526px;background:linear-gradient(90deg,#00fdfc 0px,#05fff3 157px,#26fff1 170px,#62ffef 189px,#afffe9 236px,#fbfad9 301px,#ffa576 408px,#ff7f34 477px,#ff6d04 512px,#ff6701 525px)"></b><b style="top:485px;left:109px;width:528px;background:linear-gradient(90deg,#00fdfd 0px,#04fff4 155px,#24fff3 168px,#61fff1 187px,#afffeb 234px,#fbfadb 299px,#ffa67a 404px,#ff7c33 479px,#ff6b05 512px,#ff6300 527px)"></b><b style="top:487px;left:109px;width:530px;background:linear-gradient(90deg,#00fcfe 0px,#05fff6 155px,#26fff5 168px,#62fff3 187px,#b0ffed 234px,#fafadf 297px,#ffa67d 402px,#ff7934 481px,#ff6704 516px,#ff6101 529px)"></b><b style="top:489px;left:110px;width:531px;background:linear-gradient(90deg,#00fbfe 0px,#04fef7 153px,#23fef6 166px,#61fff5 185px,#adfff0 230px,#fbfae1 295px,#ffa580 400px,#ff7736 481px,#ff6404 518px,#ff5f01 529px,#ff5e01 530px)"></b><b style="top:491px;left:110px;width:533px;background:linear-gradient(90deg,#00fafe 0px,#05fef9 153px,#25fef8 166px,#62fef6 185px,#b1fff2 232px,#fbf9e3 295px,#ffa684 396px,#ff7536 483px,#ff6204 520px,#ff5c01 531px,#ff5b01 532px)"></b><b style="top:493px;left:110px;width:535px;background:linear-gradient(90deg,#00f9ff 0px,#05fdfa 153px,#26fef9 166px,#63fef8 185px,#b2fff4 232px,#fbf9e6 293px,#ffa687 394px,#ff7237 485px,#ff5f05 522px,#ff5901 533px,#ff5901 534px)"></b><b style="top:495px;left:111px;width:537px;background:linear-gradient(90deg,#00f8ff 0px,#04fdfb 151px,#24fdfb 164px,#62fdf9 183px,#b2fef6 230px,#fbf9e8 291px,#ffa589 392px,#ff6f36 487px,#ff5c05 524px,#ff5601 535px,#ff5501 536px)"></b><b style="top:497px;left:111px;width:539px;background:linear-gradient(90deg,#00f7ff 0px,#05fcfc 151px,#26fcfc 164px,#63fdfb 183px,#b3fef7 230px,#fbf9eb 289px,#ffa58c 390px,#ff6c37 489px,#ff5905 526px,#ff5301 537px,#ff5201 538px)"></b><b style="top:499px;left:111px;width:541px;background:linear-gradient(90deg,#00f5ff 0px,#05fbfd 151px,#27fbfd 164px,#64fcfc 183px,#b7fdf9 232px,#fcf8ed 289px,#ffa690 386px,#ff6a37 491px,#ff5504 530px,#ff5001 539px,#ff4f01 540px)"></b><b style="top:501px;left:112px;width:542px;background:linear-gradient(90deg,#00f4ff 0px,#04fafe 149px,#25fafd 162px,#63fbfd 181px,#b3fcfa 228px,#fcf8ef 287px,#ffa592 384px,#ff6636 493px,#ff5104 532px,#ff4c01 541px)"></b><b style="top:503px;left:112px;width:544px;background:linear-gradient(90deg,#00f3ff 0px,#05f8fe 149px,#26f9fe 162px,#63fafd 181px,#b7fbfb 230px,#fbf8f2 285px,#ffa494 384px,#ff6437 495px,#ff4e04 534px,#ff4801 543px)"></b><b style="top:505px;left:113px;width:546px;background:linear-gradient(90deg,#00f2ff 0px,#04f7fe 147px,#24f7fe 160px,#62f8fe 179px,#b3fafd 226px,#fcf6f3 285px,#ffa497 380px,#ff6036 497px,#ff4a04 536px,#ff4401 545px)"></b><b style="top:507px;left:113px;width:548px;background:linear-gradient(90deg,#00f0ff 0px,#05f5ff 147px,#25f6ff 160px,#62f6fe 179px,#b6f9fd 228px,#fbf6f6 283px,#ffa398 380px,#ff5d37 499px,#ff4604 538px,#ff4001 547px)"></b><b style="top:509px;left:113px;width:550px;background:linear-gradient(90deg,#00efff 0px,#05f3ff 147px,#26f4ff 160px,#63f5ff 179px,#b9f7fe 230px,#fbf4f7 283px,#ffa199 380px,#ff5a37 501px,#ff4205 540px,#ff3c01 549px)"></b><b style="top:511px;left:114px;width:551px;background:linear-gradient(90deg,#00eeff 0px,#04f2ff 145px,#24f2ff 158px,#61f3ff 177px,#b5f5fe 226px,#fcf2f7 283px,#ffa09b 378px,#ff5737 503px,#ff3e04 542px,#ff3802 549px,#ff3701 550px)"></b><b style="top:513px;left:114px;width:553px;background:linear-gradient(90deg,#00ecff 0px,#05f0ff 145px,#25f0ff 158px,#62f1ff 177px,#b7f3ff 228px,#fcf0f8 283px,#ff9e9b 380px,#ff5437 505px,#ff3905 544px,#ff3302 551px,#ff3201 552px)"></b><b style="top:515px;left:115px;width:555px;background:linear-gradient(90deg,#00ebff 0px,#04eeff 143px,#23efff 156px,#65efff 177px,#bef1ff 232px,#fcedf7 283px,#ff9d9d 378px,#ff5036 507px,#ff3304 546px,#ff2d02 553px,#ff2c01 554px)"></b><b style="top:517px;left:115px;width:557px;background:linear-gradient(90deg,#00eaff 0px,#04edff 143px,#24edff 156px,#61edff 175px,#b3efff 224px,#fcebf8 283px,#ff9a9c 380px,#ff4c37 509px,#ff2c04 550px,#ff2702 555px,#ff2501 556px)"></b><b style="top:519px;left:115px;width:559px;background:linear-gradient(90deg,#00e9ff 0px,#05ebff 143px,#25ebff 156px,#61ecff 175px,#b6edff 226px,#fce9f9 283px,#ff989d 380px,#ff4837 511px,#ff2604 552px,#ff2002 557px,#ff1f02 558px)"></b><b style="top:521px;left:116px;width:560px;background:linear-gradient(90deg,#00e7ff 0px,#04e9ff 141px,#23e9ff 154px,#64eaff 175px,#bcebff 230px,#fce7f8 283px,#ff969d 380px,#ff4437 513px,#ff1e04 554px,#ff1802 559px)"></b><b style="top:523px;left:116px;width:562px;background:linear-gradient(90deg,#00e6ff 0px,#04e7ff 141px,#24e8ff 154px,#60e8ff 173px,#b4e9ff 224px,#fce5f9 283px,#ff939d 382px,#ff4037 515px,#ff1704 556px,#ff1202 561px)"></b><b style="top:525px;left:117px;width:564px;background:linear-gradient(90deg,#00e5ff 0px,#04e6ff 139px,#22e6ff 152px,#63e6ff 173px,#bae7ff 228px,#fce2f9 283px,#ff919d 382px,#ff3a37 517px,#ff1004 558px,#ff0c02 563px)"></b><b style="top:527px;left:117px;width:566px;background:linear-gradient(90deg,#00e4ff 0px,#04e4ff 139px,#23e4ff 152px,#63e4ff 173px,#bae4ff 228px,#fce0f9 283px,#ff8e9d 384px,#ff3537 519px,#ff0b04 560px,#ff0702 565px)"></b><b style="top:529px;left:118px;width:567px;background:linear-gradient(90deg,#00e2ff 0px,#04e2ff 137px,#21e2ff 150px,#61e2ff 171px,#b6e2ff 224px,#fcddf9 283px,#ff8d9f 382px,#ff3039 519px,#ff0604 562px,#ff0503 565px,#ff0402 566px)"></b><b style="top:531px;left:118px;width:569px;background:linear-gradient(90deg,#00e1ff 0px,#04e1ff 137px,#22e1ff 150px,#62e0ff 171px,#b8e0ff 226px,#fcdbfa 283px,#ff8a9e 384px,#ff313f 515px,#ff0405 562px,#ff0303 567px,#ff0202 568px)"></b><b style="top:533px;left:118px;width:571px;background:linear-gradient(90deg,#00e0ff 0px,#04dfff 137px,#23dfff 150px,#62dfff 171px,#badeff 228px,#fdd7f9 285px,#ff889f 384px,#ff3145 511px,#ff040b 558px,#ff0103 569px,#ff0103 570px)"></b><b style="top:535px;left:119px;width:572px;background:linear-gradient(90deg,#00dfff 0px,#04ddff 135px,#21ddff 148px,#61ddff 169px,#b6dcff 224px,#fdd5f8 285px,#ff859f 384px,#ff3049 507px,#ff0514 552px,#ff0103 571px)"></b><b style="top:537px;left:119px;width:575px;background:linear-gradient(90deg,#00ddff 0px,#04dcff 135px,#22dbff 148px,#61dbff 169px,#b6daff 224px,#fcd3f9 285px,#ff829f 386px,#ff304e 503px,#ff051e 548px,#ff0003 573px,#ff0003 574px)"></b><b style="top:539px;left:120px;width:576px;background:linear-gradient(90deg,#00dcff 0px,#06daff 135px,#27daff 148px,#60d9ff 167px,#b2d8ff 220px,#fdd0f8 285px,#ff809f 386px,#ff2f52 499px,#ff0426 544px,#ff0003 575px)"></b><b style="top:541px;left:120px;width:578px;background:linear-gradient(90deg,#00dbff 0px,#04d8ff 133px,#21d8ff 146px,#60d7ff 167px,#b4d6ff 222px,#fccef9 285px,#ff7d9f 388px,#ff2f57 495px,#ff042f 540px,#ff0003 577px)"></b><b style="top:543px;left:121px;width:579px;background:linear-gradient(90deg,#00daff 0px,#05d7ff 133px,#26d6ff 146px,#63d6ff 167px,#bad3ff 226px,#fdcbf9 285px,#ff7a9f 388px,#ff2e5a 491px,#ff0435 536px,#ff0004 577px,#ff0003 578px)"></b><b style="top:545px;left:121px;width:581px;background:linear-gradient(90deg,#00d8ff 0px,#04d5ff 131px,#20d5ff 144px,#5fd4ff 165px,#b3d2ff 220px,#fcc9f9 285px,#ff779f 390px,#ff2e5f 487px,#ff053e 530px,#ff0004 579px,#ff0004 580px)"></b><b style="top:547px;left:122px;width:583px;background:linear-gradient(90deg,#00d7ff 0px,#05d3ff 131px,#25d3ff 144px,#61d2ff 165px,#b9cfff 224px,#fdc6f9 285px,#ff749f 390px,#ff2d62 483px,#ff0443 526px,#ff0004 581px,#ff0004 582px)"></b><b style="top:549px;left:122px;width:585px;background:linear-gradient(90deg,#00d6ff 0px,#05d2ff 131px,#26d1ff 144px,#62d0ff 165px,#b8cdff 224px,#fcc4f9 285px,#ff719e 392px,#ff2d66 479px,#ff0448 522px,#ff0014 567px,#ff0004 584px)"></b><b style="top:551px;left:122px;width:587px;background:linear-gradient(90deg,#00d5ff 0px,#04d0ff 129px,#20d0ff 142px,#5ecfff 163px,#b1cbff 218px,#fdc0f8 287px,#ff6f9f 392px,#ff2b68 477px,#ff044d 518px,#ff001e 563px,#ff0004 586px)"></b><b style="top:553px;left:123px;width:588px;background:linear-gradient(90deg,#00d3ff 0px,#05cfff 129px,#25ceff 142px,#61cdff 163px,#b7c9ff 222px,#fcbffa 285px,#ff6ca0 392px,#ff2a6c 473px,#ff0450 514px,#ff0020 563px,#ff0005 586px,#ff0004 587px)"></b><b style="top:555px;left:123px;width:590px;background:linear-gradient(90deg,#00d2ff 0px,#06cdff 129px,#2dccff 144px,#65cbff 165px,#c0c6ff 230px,#fdbbf9 287px,#ff6aa0 392px,#ff2a6f 469px,#ff0455 510px,#ff0024 563px,#ff0005 588px,#ff0005 589px)"></b><b style="top:557px;left:124px;width:592px;background:linear-gradient(90deg,#00d1ff 0px,#05ccff 127px,#24cbff 140px,#60caff 161px,#b5c5ff 220px,#fdb9f8 287px,#ff67a1 392px,#ff2972 465px,#ff045a 504px,#ff0028 561px,#ff0005 590px,#ff0005 591px)"></b><b style="top:559px;left:124px;width:594px;background:linear-gradient(90deg,#00d0ff 0px,#05caff 127px,#2cc9ff 142px,#64c8ff 163px,#bec2ff 228px,#fdb7f9 287px,#ff64a0 394px,#ff2775 463px,#ff045e 500px,#ff0029 563px,#ff0006 592px,#ff0005 593px)"></b><b style="top:561px;left:125px;width:595px;background:linear-gradient(90deg,#00ceff 0px,#05c8ff 125px,#23c8ff 138px,#5fc6ff 159px,#b1c1ff 216px,#fdb4f9 287px,#ff61a0 394px,#ff2678 459px,#ff0461 496px,#ff002b 563px,#ff0005 594px)"></b><b style="top:563px;left:125px;width:597px;background:linear-gradient(90deg,#00cdff 0px,#05c7ff 125px,#24c6ff 138px,#5fc4ff 159px,#b3bfff 218px,#fdb2f9 287px,#ff5da0 396px,#ff2179 459px,#ff0363 494px,#ff002c 565px,#ff0006 596px)"></b><b style="top:565px;left:126px;width:598px;background:linear-gradient(90deg,#00ccff 0px,#04c5ff 123px,#22c4ff 136px,#5dc3ff 157px,#afbdff 214px,#fdaff9 287px,#ff59a0 396px,#ff1d7a 457px,#ff0265 492px,#ff002d 565px,#ff0007 596px,#ff0006 597px)"></b><b style="top:567px;left:126px;width:601px;background:linear-gradient(90deg,#00cbff 0px,#05c4ff 123px,#23c3ff 136px,#5ec1ff 157px,#b2bbff 216px,#fdacf9 287px,#ff55a0 398px,#ff046d 481px,#ff002f 566px,#ff0006 599px,#ff0006 600px)"></b><b style="top:569px;left:127px;width:602px;background:linear-gradient(90deg,#00c9ff 0px,#04c2ff 121px,#21c1ff 134px,#5cbfff 155px,#aeb9ff 212px,#fdaaf9 287px,#ff52a0 398px,#ff0571 475px,#ff0031 566px,#ff0006 601px)"></b><b style="top:571px;left:127px;width:604px;background:linear-gradient(90deg,#00c8ff 0px,#04c1ff 121px,#22c0ff 134px,#5dbeff 155px,#aeb7ff 212px,#fda7fa 287px,#ff4da0 400px,#ff0575 471px,#ff0031 568px,#ff0007 603px)"></b><b style="top:573px;left:128px;width:605px;background:linear-gradient(90deg,#00c7ff 0px,#04bfff 119px,#20beff 132px,#5bbcff 153px,#acb6ff 210px,#fda4f9 287px,#ff49a0 400px,#ff0579 465px,#ff0033 568px,#ff0008 603px,#ff0007 604px)"></b><b style="top:575px;left:128px;width:607px;background:linear-gradient(90deg,#00c6ff 0px,#04beff 119px,#21bcff 132px,#5cbaff 153px,#acb4ff 210px,#fda2fa 287px,#ff46a1 400px,#ff057c 461px,#ff0033 570px,#ff0008 605px,#ff0007 606px)"></b><b style="top:577px;left:129px;width:608px;background:linear-gradient(90deg,#00c4ff 0px,#06bcff 119px,#2dbbff 134px,#62b8ff 155px,#bbb0ff 222px,#fd9ef8 289px,#ff41a1 400px,#ff0680 455px,#ff0033 572px,#ff0008 607px)"></b><b style="top:579px;left:129px;width:611px;background:linear-gradient(90deg,#00c3ff 0px,#04bbff 117px,#20b9ff 130px,#5bb7ff 151px,#abb0ff 208px,#fd9dfa 287px,#ff3ba1 402px,#ff0683 451px,#ff0033 574px,#ff0008 609px,#ff0008 610px)"></b><b style="top:581px;left:130px;width:612px;background:linear-gradient(90deg,#00c2ff 0px,#05b9ff 117px,#2bb7ff 132px,#61b5ff 153px,#b7acff 218px,#fd98f8 289px,#ff36a1 402px,#ff0586 447px,#ff0035 574px,#ff0008 611px)"></b><b style="top:583px;left:130px;width:613px;background:linear-gradient(90deg,#00c1ff 0px,#06b7ff 117px,#2db6ff 132px,#61b3ff 153px,#b9aaff 220px,#fd96f9 289px,#ff31a2 402px,#ff0589 443px,#ff0035 576px,#ff000a 611px,#ff0009 612px)"></b><b style="top:585px;left:131px;width:609px;background:linear-gradient(90deg,#00bfff 0px,#05b6ff 115px,#2ab4ff 130px,#60b2ff 151px,#b5a8ff 216px,#fd93f9 289px,#ff32a6 396px,#ff068d 437px,#ff0035 578px,#ff0011 607px,#ff000f 608px)"></b><b style="top:587px;left:131px;width:604px;background:linear-gradient(90deg,#00beff 0px,#05b4ff 115px,#2cb3ff 130px,#60b0ff 151px,#b7a6ff 218px,#fd91f9 289px,#ff32a9 392px,#ff0690 433px,#ff0035 580px,#ff0019 603px)"></b><b style="top:589px;left:132px;width:599px;background:linear-gradient(90deg,#00bdff 0px,#05b3ff 113px,#29b1ff 128px,#5fafff 149px,#b4a4ff 214px,#fd8df9 289px,#ff31ac 388px,#ff0694 427px,#ff0034 582px,#ff0024 597px,#ff0022 598px)"></b><b style="top:591px;left:132px;width:594px;background:linear-gradient(90deg,#00bcff 0px,#05b1ff 113px,#2bb0ff 128px,#5fadff 149px,#b4a2ff 214px,#fd8bf9 289px,#ff32af 384px,#ff0697 423px,#ff0035 584px,#ff002c 593px)"></b><b style="top:593px;left:133px;width:588px;background:linear-gradient(90deg,#00baff 0px,#04b0ff 111px,#28aeff 126px,#5eabff 147px,#b3a0ff 212px,#fd88f9 289px,#ff30b2 380px,#ff059a 419px,#ff0036 584px,#ff0033 587px)"></b><b style="top:595px;left:133px;width:584px;background:linear-gradient(90deg,#00b9ff 0px,#05aeff 111px,#2aadff 126px,#5eaaff 147px,#b29eff 212px,#fd85fa 289px,#ff31b5 376px,#ff059d 415px,#ff003a 582px,#ff0039 583px)"></b><b style="top:597px;left:134px;width:578px;background:linear-gradient(90deg,#00b8ff 0px,#04adff 109px,#27abff 124px,#5da8ff 145px,#af9dff 208px,#fd82f9 289px,#ff32b9 370px,#ff06a1 409px,#ff0040 576px,#ff003f 577px)"></b><b style="top:599px;left:134px;width:573px;background:linear-gradient(90deg,#00b7ff 0px,#05abff 109px,#29a9ff 124px,#5da6ff 145px,#b19aff 210px,#fd7ffa 289px,#ff30bb 368px,#ff06a4 405px,#ff0044 572px)"></b><b style="top:601px;left:135px;width:568px;background:linear-gradient(90deg,#00b5ff 0px,#04aaff 107px,#20a8ff 120px,#58a5ff 141px,#a59bff 198px,#fd7cfa 289px,#ff2ebe 364px,#ff05a6 401px,#ff0049 566px,#ff0049 567px)"></b><b style="top:603px;left:135px;width:563px;background:linear-gradient(90deg,#00b4ff 0px,#04a8ff 107px,#28a6ff 122px,#5da3ff 143px,#b096ff 208px,#fd79fa 289px,#ff2fc2 360px,#ff05aa 397px,#ff004d 562px)"></b><b style="top:605px;left:136px;width:557px;background:linear-gradient(90deg,#00b3ff 0px,#06a7ff 107px,#32a4ff 124px,#65a1ff 147px,#c38fff 226px,#fe74f8 291px,#ff2ac3 358px,#ff05ac 393px,#ff0052 556px)"></b><b style="top:607px;left:136px;width:553px;background:linear-gradient(90deg,#00b1ff 0px,#04a6ff 105px,#27a3ff 120px,#5ca0ff 141px,#ac93ff 204px,#fe71f9 291px,#ff2bc6 354px,#ff05af 389px,#ff0055 552px)"></b><b style="top:609px;left:137px;width:547px;background:linear-gradient(90deg,#00b0ff 0px,#06a4ff 105px,#31a1ff 122px,#649dff 145px,#c28bff 224px,#fe6df9 291px,#ff26c8 352px,#ff04b2 385px,#ff0059 546px)"></b><b style="top:611px;left:138px;width:541px;background:linear-gradient(90deg,#00afff 0px,#05a2ff 103px,#29a0ff 118px,#5c9dff 139px,#ae8eff 204px,#fd6bfa 289px,#ff25cb 348px,#ff04b5 381px,#ff005d 540px)"></b><b style="top:613px;left:138px;width:536px;background:linear-gradient(90deg,#00aeff 0px,#05a1ff 103px,#2a9fff 118px,#5d9bff 139px,#b08cff 206px,#fd68fa 289px,#ff1fcb 348px,#ff03b7 379px,#ff0062 534px,#ff0061 535px)"></b><b style="top:615px;left:139px;width:531px;background:linear-gradient(90deg,#00acff 0px,#05a0ff 101px,#289dff 116px,#5c99ff 137px,#ad8aff 202px,#fc65fb 287px,#ff1bcd 346px,#ff02b8 377px,#ff0064 530px)"></b><b style="top:617px;left:139px;width:526px;background:linear-gradient(90deg,#00abff 0px,#059eff 101px,#299bff 116px,#5c98ff 137px,#ae88ff 204px,#fc62fb 287px,#ff07c2 362px,#ff0084 471px,#ff0069 524px,#ff0068 525px)"></b><b style="top:619px;left:140px;width:520px;background:linear-gradient(90deg,#00aaff 0px,#049dff 99px,#279aff 114px,#5b96ff 135px,#ab86ff 200px,#fb5ffc 285px,#ff06c5 358px,#ff0070 511px,#ff006c 518px,#ff006c 519px)"></b><b style="top:621px;left:140px;width:516px;background:linear-gradient(90deg,#00a8ff 0px,#059bff 99px,#2898ff 114px,#5b94ff 135px,#ab84ff 200px,#fb5cfc 285px,#ff08ca 352px,#ff0097 437px,#ff006f 514px,#ff006f 515px)"></b><b style="top:623px;left:141px;width:510px;background:linear-gradient(90deg,#00a7ff 0px,#049aff 97px,#2697ff 112px,#5a93ff 133px,#aa82ff 198px,#f95afe 281px,#ff07cd 348px,#ff008d 457px,#ff0073 508px,#ff0072 509px)"></b><b style="top:625px;left:142px;width:504px;background:linear-gradient(90deg,#00a6ff 0px,#0598ff 97px,#3195ff 114px,#6290ff 137px,#bd7aff 216px,#fc51fc 285px,#ff08d1 342px,#ff009d 427px,#ff0076 502px,#ff0076 503px)"></b><b style="top:627px;left:142px;width:500px;background:linear-gradient(90deg,#00a4ff 0px,#0696ff 97px,#5b8fff 132px,#ac7dff 199px,#f754fe 278px,#ff11dc 327px,#ff00c4 362px,#ff0079 499px)"></b><b style="top:629px;left:143px;width:494px;background:linear-gradient(90deg,#00a3ff 0px,#0595ff 95px,#3092ff 112px,#618dff 135px,#b976ff 212px,#f84efe 279px,#ff08d9 332px,#ff00ab 403px,#ff007c 492px,#ff007c 493px)"></b><b style="top:631px;left:144px;width:488px;background:linear-gradient(90deg,#00a2ff 0px,#0594ff 93px,#2791ff 108px,#5a8cff 129px,#a87aff 194px,#f150ff 271px,#ff20ed 306px,#ff03d5 337px,#ff0080 486px,#ff007f 487px)"></b><b style="top:633px;left:144px;width:483px;background:linear-gradient(90deg,#00a0ff 0px,#0592ff 93px,#298fff 108px,#5a8aff 129px,#aa77ff 196px,#ef4dff 269px,#ff20f1 302px,#ff04da 331px,#ff0082 482px)"></b><b style="top:635px;left:145px;width:478px;background:linear-gradient(90deg,#009fff 0px,#0491ff 91px,#268eff 106px,#5989ff 127px,#a776ff 192px,#ec4cff 265px,#ff1cf2 300px,#ff03db 329px,#ff0086 476px,#ff0085 477px)"></b><b style="top:637px;left:145px;width:473px;background:linear-gradient(90deg,#009eff 0px,#058fff 91px,#288cff 106px,#5987ff 127px,#a973ff 194px,#ea49ff 263px,#ff19f4 298px,#ff02dc 329px,#ff0089 472px)"></b><b style="top:639px;left:146px;width:467px;background:linear-gradient(90deg,#009cff 0px,#048eff 89px,#268bff 104px,#5886ff 125px,#a671ff 190px,#e54aff 257px,#ff15f6 296px,#ff01dd 327px,#ff008c 466px)"></b><b style="top:641px;left:147px;width:462px;background:linear-gradient(90deg,#009bff 0px,#058cff 89px,#3688ff 108px,#6981ff 135px,#ce59ff 232px,#f52cff 275px,#ff06ec 308px,#ff0097 445px,#ff008f 460px,#ff008f 461px)"></b><b style="top:643px;left:147px;width:457px;background:linear-gradient(90deg,#009aff 0px,#068aff 89px,#5982ff 124px,#a86cff 191px,#e044ff 252px,#fe0cf7 295px,#ff00d7 336px,#ff0092 455px,#ff0092 456px)"></b><b style="top:645px;left:148px;width:451px;background:linear-gradient(90deg,#0098ff 0px,#0589ff 87px,#2f85ff 104px,#607fff 127px,#b762ff 206px,#e33aff 255px,#ff07f6 296px,#ff00b9 383px,#ff0095 450px)"></b><b style="top:647px;left:149px;width:446px;background:linear-gradient(90deg,#0097ff 0px,#0587ff 85px,#2784ff 100px,#587fff 121px,#a767ff 188px,#db40ff 245px,#fe07f8 292px,#ff00ac 407px,#ff0098 444px,#ff0098 445px)"></b><b style="top:649px;left:149px;width:441px;background:linear-gradient(90deg,#0096ff 0px,#0586ff 85px,#2e82ff 102px,#5f7cff 125px,#b45eff 202px,#de35ff 249px,#fe06fa 290px,#ff00a4 423px,#ff009b 440px)"></b><b style="top:651px;left:150px;width:435px;background:linear-gradient(90deg,#0094ff 0px,#0484ff 83px,#2681ff 98px,#577bff 119px,#a563ff 186px,#d63bff 239px,#fb06fd 284px,#ff00a0 431px,#ff009e 434px)"></b><b style="top:653px;left:151px;width:429px;background:linear-gradient(90deg,#0093ff 0px,#0683ff 83px,#5879ff 118px,#a560ff 185px,#d438ff 236px,#f906fe 279px,#ff00bc 380px,#ff00a2 427px,#ff00a1 428px)"></b><b style="top:655px;left:151px;width:425px;background:linear-gradient(90deg,#0091ff 0px,#0481ff 81px,#257eff 96px,#5678ff 117px,#a25fff 182px,#d136ff 233px,#f406ff 274px,#ff00e9 313px,#ff00a4 424px)"></b><b style="top:657px;left:152px;width:419px;background:linear-gradient(90deg,#0090ff 0px,#0580ff 81px,#5776ff 116px,#a45bff 183px,#d031ff 232px,#f205ff 271px,#ff00ec 308px,#ff00a8 417px,#ff00a7 418px)"></b><b style="top:659px;left:153px;width:413px;background:linear-gradient(90deg,#008eff 0px,#057eff 79px,#2d7aff 96px,#5e73ff 119px,#b14fff 196px,#de16ff 247px,#f901fe 280px,#ff00ab 411px,#ff00ab 412px)"></b><b style="top:661px;left:154px;width:408px;background:linear-gradient(90deg,#008dff 0px,#047dff 77px,#2579ff 92px,#5672ff 113px,#a356ff 180px,#cc2cff 225px,#ec05ff 262px,#ff00f3 299px,#ff00ae 406px,#ff00ae 407px)"></b><b style="top:663px;left:154px;width:403px;background:linear-gradient(90deg,#008bff 0px,#057bff 77px,#2c76ff 94px,#5d6fff 117px,#b049ff 194px,#e705ff 257px,#ff00f6 296px,#ff00b1 401px,#ff00b1 402px)"></b><b style="top:665px;left:155px;width:397px;background:linear-gradient(90deg,#008aff 0px,#0679ff 77px,#576fff 112px,#a54eff 181px,#d018ff 230px,#ec01ff 263px,#ff00f2 300px,#ff00b5 395px,#ff00b4 396px)"></b><b style="top:667px;left:156px;width:392px;background:linear-gradient(90deg,#0088ff 0px,#0578ff 75px,#566dff 110px,#a24dff 177px,#e004ff 248px,#fe00f7 293px,#ff00b8 390px,#ff00b7 391px)"></b><b style="top:669px;left:156px;width:387px;background:linear-gradient(90deg,#0087ff 0px,#0676ff 75px,#566bff 110px,#a249ff 177px,#db05ff 242px,#fe00f8 293px,#ff00ba 386px)"></b><b style="top:671px;left:157px;width:381px;background:linear-gradient(90deg,#0085ff 0px,#0574ff 73px,#336fff 92px,#6565ff 119px,#ab3dff 186px,#d705ff 237px,#fe00f8 292px,#ff00be 379px,#ff00be 380px)"></b><b style="top:673px;left:158px;width:375px;background:linear-gradient(90deg,#0084ff 0px,#0473ff 71px,#2c6eff 88px,#5c66ff 111px,#a63dff 180px,#d206ff 231px,#fe00f8 292px,#ff00c2 373px,#ff00c1 374px)"></b><b style="top:675px;left:159px;width:370px;background:linear-gradient(90deg,#0082ff 0px,#0671ff 71px,#5665ff 106px,#a33dff 175px,#cf05ff 226px,#fe00f8 291px,#ff00c5 368px,#ff00c4 369px)"></b><b style="top:677px;left:159px;width:365px;background:linear-gradient(90deg,#0081ff 0px,#0470ff 69px,#256bff 84px,#5863ff 107px,#a03bff 172px,#cc05ff 223px,#fe00f8 292px,#ff00c8 363px,#ff00c8 364px)"></b><b style="top:679px;left:160px;width:359px;background:linear-gradient(90deg,#007fff 0px,#066eff 69px,#5561ff 104px,#9e39ff 169px,#c805ff 218px,#fe00f9 291px,#ff00cb 358px)"></b><b style="top:681px;left:161px;width:354px;background:linear-gradient(90deg,#007eff 0px,#056cff 67px,#3266ff 86px,#645bff 113px,#9e34ff 168px,#c505ff 213px,#fe00f9 290px,#ff00ce 353px)"></b><b style="top:683px;left:162px;width:348px;background:linear-gradient(90deg,#007cff 0px,#046bff 65px,#2b65ff 82px,#5a5cff 105px,#9935ff 162px,#c005ff 207px,#fe00f9 290px,#ff00d2 347px)"></b><b style="top:685px;left:163px;width:342px;background:linear-gradient(90deg,#007aff 0px,#0669ff 65px,#555bff 100px,#9634ff 157px,#bd05ff 202px,#fe00f9 289px,#ff00d6 340px,#ff00d5 341px)"></b><b style="top:687px;left:163px;width:338px;background:linear-gradient(90deg,#0079ff 0px,#0667ff 65px,#5559ff 100px,#9432ff 155px,#b905ff 198px,#fe00fa 289px,#ff00d9 336px,#ff00d8 337px)"></b><b style="top:689px;left:164px;width:332px;background:linear-gradient(90deg,#0077ff 0px,#0565ff 63px,#5457ff 98px,#9130ff 151px,#b704ff 194px,#fe00f9 289px,#ff00dd 330px,#ff00dc 331px)"></b><b style="top:691px;left:165px;width:326px;background:linear-gradient(90deg,#0075ff 0px,#0564ff 61px,#325cff 80px,#624fff 107px,#9624ff 156px,#b504ff 191px,#fe00fa 288px,#ff00e0 325px)"></b><b style="top:693px;left:166px;width:320px;background:linear-gradient(90deg,#0074ff 0px,#0661ff 61px,#5253ff 94px,#8d2bff 145px,#b004ff 184px,#fe00f9 289px,#ff00e5 318px,#ff00e4 319px)"></b><b style="top:695px;left:167px;width:315px;background:linear-gradient(90deg,#0072ff 0px,#0660ff 59px,#5450ff 94px,#8c27ff 143px,#ad04ff 180px,#fe00fa 287px,#ff00e7 314px)"></b><b style="top:697px;left:167px;width:310px;background:linear-gradient(90deg,#0070ff 0px,#065eff 59px,#544dff 94px,#8c21ff 143px,#ab03ff 178px,#fe00f9 289px,#ff00ec 308px,#ff00eb 309px)"></b><b style="top:699px;left:168px;width:304px;background:linear-gradient(90deg,#006fff 0px,#055cff 57px,#534bff 92px,#8b1dff 141px,#aa02ff 176px,#fe00fa 287px,#ff00f0 302px,#ff00ef 303px)"></b><b style="top:701px;left:169px;width:299px;background:linear-gradient(90deg,#006dff 0px,#055aff 55px,#3152ff 74px,#6141ff 101px,#a104ff 164px,#fe00fa 287px,#ff00f3 298px)"></b><b style="top:703px;left:170px;width:293px;background:linear-gradient(90deg,#006bff 0px,#0658ff 55px,#5445ff 90px,#9f04ff 161px,#fe00fa 286px,#ff00f7 291px,#ff00f7 292px)"></b><b style="top:705px;left:171px;width:287px;background:linear-gradient(90deg,#0069ff 0px,#0556ff 53px,#5343ff 88px,#9b04ff 155px,#fe00fa 286px)"></b><b style="top:707px;left:172px;width:282px;background:linear-gradient(90deg,#0067ff 0px,#0554ff 51px,#314bff 70px,#6137ff 97px,#9505ff 148px,#fd00fc 281px)"></b><b style="top:709px;left:172px;width:277px;background:linear-gradient(90deg,#0065ff 0px,#0552ff 51px,#523dff 86px,#9304ff 145px,#fa00fe 276px)"></b><b style="top:711px;left:173px;width:271px;background:linear-gradient(90deg,#0063ff 0px,#074fff 51px,#513aff 84px,#8e05ff 139px,#f600ff 270px)"></b><b style="top:713px;left:174px;width:266px;background:linear-gradient(90deg,#0061ff 0px,#064dff 49px,#5335ff 84px,#8c04ff 135px,#f200ff 264px,#f300ff 265px)"></b><b style="top:715px;left:175px;width:260px;background:linear-gradient(90deg,#005fff 0px,#054bff 47px,#5232ff 82px,#8704ff 129px,#ee00ff 258px,#ef00ff 259px)"></b><b style="top:717px;left:176px;width:254px;background:linear-gradient(90deg,#005dff 0px,#0748ff 47px,#512eff 80px,#8404ff 125px,#ea00ff 252px,#eb00ff 253px)"></b><b style="top:719px;left:177px;width:248px;background:linear-gradient(90deg,#005bff 0px,#0646ff 45px,#5229ff 80px,#8103ff 121px,#e600ff 246px,#e700ff 247px)"></b><b style="top:721px;left:178px;width:243px;background:linear-gradient(90deg,#0058ff 0px,#0544ff 43px,#5125ff 78px,#7f03ff 117px,#e300ff 242px)"></b><b style="top:723px;left:179px;width:237px;background:linear-gradient(90deg,#0056ff 0px,#0740ff 43px,#5021ff 76px,#7c03ff 113px,#df00ff 236px)"></b><b style="top:725px;left:180px;width:231px;background:linear-gradient(90deg,#0054ff 0px,#063eff 41px,#4f1dff 74px,#7902ff 109px,#db00ff 230px)"></b><b style="top:727px;left:180px;width:227px;background:linear-gradient(90deg,#0051ff 0px,#073aff 41px,#5019ff 74px,#7902ff 109px,#d800ff 226px)"></b><b style="top:729px;left:181px;width:221px;background:linear-gradient(90deg,#004fff 0px,#0638ff 39px,#5113ff 74px,#7c01ff 111px,#d400ff 220px)"></b><b style="top:731px;left:182px;width:215px;background:linear-gradient(90deg,#004cff 0px,#0535ff 37px,#5010ff 72px,#7d00ff 111px,#d000ff 214px)"></b><b style="top:733px;left:183px;width:210px;background:linear-gradient(90deg,#0049ff 0px,#0730ff 37px,#4f0dff 70px,#8000ff 113px,#cc00ff 208px,#cd00ff 209px)"></b><b style="top:735px;left:184px;width:204px;background:linear-gradient(90deg,#0047ff 0px,#062dff 35px,#5109ff 70px,#9400ff 135px,#c800ff 202px,#c900ff 203px)"></b><b style="top:737px;left:185px;width:198px;background:linear-gradient(90deg,#0043ff 0px,#0827ff 35px,#4d08ff 66px,#9200ff 131px,#c400ff 196px,#c500ff 197px)"></b><b style="top:739px;left:187px;width:191px;background:linear-gradient(90deg,#003fff 0px,#0625ff 31px,#5105ff 66px,#9900ff 137px,#c100ff 190px)"></b><b style="top:741px;left:188px;width:186px;background:linear-gradient(90deg,#003cff 0px,#081fff 31px,#4f04ff 64px,#9600ff 133px,#bd00ff 184px,#be00ff 185px)"></b><b style="top:743px;left:189px;width:180px;background:linear-gradient(90deg,#0038ff 0px,#071bff 29px,#4e03ff 62px,#9500ff 131px,#ba00ff 178px,#ba00ff 179px)"></b><b style="top:745px;left:190px;width:174px;background:linear-gradient(90deg,#0034ff 0px,#0916ff 29px,#4d02ff 60px,#9300ff 127px,#b600ff 172px,#b600ff 173px)"></b><b style="top:747px;left:191px;width:169px;background:linear-gradient(90deg,#002fff 0px,#0812ff 27px,#4f01ff 60px,#9700ff 131px,#b300ff 168px)"></b><b style="top:749px;left:192px;width:163px;background:linear-gradient(90deg,#002aff 0px,#070fff 25px,#4e01ff 58px,#9400ff 127px,#b000ff 162px)"></b><b style="top:751px;left:193px;width:157px;background:linear-gradient(90deg,#0024ff 0px,#090bff 25px,#4d00ff 56px,#9200ff 123px,#ac00ff 156px)"></b><b style="top:753px;left:195px;width:151px;background:linear-gradient(90deg,#001dff 0px,#0908ff 23px,#4e00ff 54px,#9400ff 123px,#a900ff 150px)"></b><b style="top:755px;left:196px;width:145px;background:linear-gradient(90deg,#0018ff 0px,#0906ff 21px,#4c00ff 52px,#9100ff 119px,#a500ff 144px)"></b><b style="top:757px;left:197px;width:139px;background:linear-gradient(90deg,#0012ff 0px,#0b04ff 21px,#4b00ff 50px,#8f00ff 115px,#a100ff 138px)"></b><b style="top:759px;left:198px;width:133px;background:linear-gradient(90deg,#000eff 0px,#0a03ff 19px,#4d00ff 50px,#9300ff 119px,#9d00ff 132px)"></b><b style="top:761px;left:200px;width:127px;background:linear-gradient(90deg,#0009ff 0px,#0a02ff 17px,#4b00ff 46px,#8e00ff 111px,#9a00ff 126px)"></b><b style="top:763px;left:201px;width:121px;background:linear-gradient(90deg,#0006ff 0px,#0d01ff 17px,#4a00ff 44px,#8b00ff 107px,#9600ff 120px)"></b><b style="top:765px;left:203px;width:114px;background:linear-gradient(90deg,#0003ff 0px,#0e01ff 15px,#4a00ff 42px,#8d00ff 107px,#9100ff 112px,#9200ff 113px)"></b><b style="top:767px;left:204px;width:109px;background:linear-gradient(90deg,#0102ff 0px,#1000ff 15px,#4900ff 40px,#8b00ff 103px,#8f00ff 108px)"></b><b style="top:769px;left:206px;width:102px;background:linear-gradient(90deg,#0101ff 0px,#1600ff 15px,#4d00ff 40px,#8b00ff 101px)"></b><b style="top:771px;left:208px;width:95px;background:linear-gradient(90deg,#0200ff 0px,#1c00ff 15px,#4d00ff 38px,#8600ff 93px,#8700ff 94px)"></b><b style="top:773px;left:209px;width:90px;background:linear-gradient(90deg,#0300ff 0px,#2500ff 17px,#5400ff 42px,#8300ff 89px)"></b><b style="top:775px;left:211px;width:83px;background:linear-gradient(90deg,#0600ff 0px,#4e00ff 35px,#7f00ff 82px)"></b><b style="top:777px;left:213px;width:76px;background:linear-gradient(90deg,#0900ff 0px,#4b00ff 31px,#7a00ff 74px,#7b00ff 75px)"></b><b style="top:779px;left:216px;width:68px;background:linear-gradient(90deg,#0f00ff 0px,#4a00ff 27px,#7600ff 66px,#7700ff 67px)"></b><b style="top:781px;left:218px;width:62px;background:linear-gradient(90deg,#1400ff 0px,#4b00ff 25px,#7200ff 60px,#7300ff 61px)"></b><b style="top:783px;left:220px;width:55px;background:linear-gradient(90deg,#1a00ff 0px,#4b00ff 23px,#6e00ff 54px)"></b><b style="top:785px;left:223px;width:47px;background:linear-gradient(90deg,#2300ff 0px,#5200ff 25px,#6a00ff 46px)"></b><b style="top:787px;left:225px;width:41px;background:linear-gradient(90deg,#2900ff 0px,#5700ff 27px,#6600ff 40px)"></b><b style="top:789px;left:228px;width:33px;background:linear-gradient(90deg,#3100ff 0px,#6000ff 31px,#6100ff 32px)"></b><b style="top:791px;left:230px;width:26px;background:linear-gradient(90deg,#3600ff 0px,#5b00ff 25px)"></b><b style="top:793px;left:232px;width:20px;background:linear-gradient(90deg,#3b00ff 0px,#5700ff 19px)"></b><b style="top:795px;left:235px;width:12px;background:linear-gradient(90deg,#4100ff 0px,#5100ff 11px)"></b></div>
<svg style="left:0;top:0" width="1195" height="978">
<defs><clipPath id="lc"><path d="M241.3 795.9 L241.3 795.9 L241.3 795.9 L241.3 795.9 L241.3 795.9 L241.2 795.9 L241.2 795.9 L241.2 795.9 L241.1 795.9 L241.1 795.9 L241.1 795.9 L241.0 795.9 L241.0 795.9 L240.9 795.9 L240.9 795.9 L240.8 795.9 L240.8 795.9 L240.8 796.0 L240.7 796.0 L240.7 796.0 L240.7 796.0 L240.6 796.0 L240.6 796.0 L240.5 796.0 L240.4 796.0 L240.4 796.0 L240.3 796.0 L240.2 796.0 L240.1 796.0 L240.1 796.0 L240.0 796.0 L239.9 796.0 L239.8 796.0 L239.7 796.0 L239.6 796.0 L239.5 796.0 L239.4 796.0 L239.3 795.9 L239.2 795.9 L239.1 795.9 L238.9 795.8 L238.8 795.7 L238.6 795.6 L238.4 795.5 L238.2 795.4 L238.0 795.2 L237.7 795.1 L237.5 794.9 L237.2 794.7 L237.0 794.5 L236.7 794.3 L236.4 794.1 L236.0 793.8 L235.7 793.6 L235.3 793.3 L234.9 793.0 L234.5 792.6 L234.1 792.3 L233.7 791.9 L233.2 791.5 L232.7 791.1 L232.2 790.7 L231.7 790.2 L231.1 789.7 L230.4 789.2 L229.8 788.7 L229.1 788.1 L228.3 787.5 L227.5 786.9 L226.7 786.2 L225.8 785.5 L224.9 784.8 L223.9 784.0 L222.9 783.2 L221.9 782.3 L220.8 781.4 L219.6 780.4 L218.4 779.4 L217.2 778.2 L215.9 777.0 L214.6 775.7 L213.2 774.4 L211.7 772.9 L210.3 771.3 L208.7 769.5 L207.0 767.5 L205.3 765.2 L203.4 762.6 L201.3 759.7 L199.2 756.4 L196.9 752.9 L194.6 749.0 L192.1 744.7 L189.5 740.0 L186.9 734.9 L184.0 729.2 L181.1 723.0 L178.0 716.2 L174.7 708.7 L171.3 700.6 L167.8 691.9 L164.0 682.4 L160.1 672.2 L156.1 661.2 L151.9 649.3 L147.7 636.5 L143.5 622.8 L139.4 608.4 L135.2 593.0 L131.1 576.8 L127.0 559.7 L122.9 541.8 L118.8 523.2 L114.9 503.9 L111.1 484.0 L107.5 463.9 L104.2 443.5 L101.1 423.0 L98.4 402.4 L96.0 381.9 L93.9 361.5 L92.3 341.4 L91.0 321.8 L90.2 302.8 L89.9 284.5 L90.1 266.7 L90.8 249.6 L92.0 233.1 L93.8 217.4 L96.1 202.7 L99.0 189.1 L102.5 176.5 L106.4 165.1 L110.9 154.9 L115.8 146.1 L121.2 138.7 L126.9 132.7 L133.0 128.0 L139.4 124.5 L145.9 122.2 L152.7 121.0 L159.6 120.7 L166.6 121.4 L173.7 122.8 L180.9 124.7 L188.1 127.2 L195.4 130.0 L202.6 133.1 L209.9 136.5 L217.1 140.0 L224.1 143.7 L231.1 147.5 L237.9 151.3 L244.7 155.3 L251.4 159.3 L258.0 163.5 L264.6 167.7 L271.2 172.1 L277.7 176.5 L284.2 181.1 L290.6 185.7 L297.1 190.4 L303.5 195.2 L310.0 200.1 L316.4 205.1 L322.8 210.1 L329.1 215.2 L335.5 220.4 L341.9 225.6 L348.2 230.9 L354.6 236.2 L361.0 241.6 L367.3 247.0 L373.7 252.4 L380.0 257.9 L386.4 263.4 L392.7 269.0 L399.1 274.6 L405.4 280.2 L411.8 285.8 L418.1 291.4 L424.5 297.1 L430.8 302.8 L437.1 308.4 L443.4 314.1 L449.8 319.8 L456.1 325.5 L462.4 331.2 L468.6 336.9 L474.9 342.6 L481.1 348.2 L487.4 353.9 L493.6 359.5 L499.7 365.2 L505.9 370.8 L512.0 376.3 L518.1 381.9 L524.1 387.4 L530.1 392.9 L536.0 398.3 L541.9 403.7 L547.8 409.0 L553.6 414.3 L559.3 419.6 L565.0 424.8 L570.6 429.9 L576.2 434.9 L581.6 439.9 L587.0 444.9 L592.4 449.7 L597.6 454.5 L602.7 459.2 L607.8 463.8 L612.8 468.4 L617.6 472.8 L622.3 477.1 L626.8 481.2 L631.2 485.2 L635.5 489.1 L639.6 492.9 L643.7 496.6 L647.7 500.3 L651.6 503.8 L655.3 507.3 L659.0 510.6 L662.5 513.8 L665.9 516.9 L669.1 519.8 L672.2 522.6 L675.2 525.3 L678.1 527.9 L680.9 530.5 L683.5 532.9 L686.0 535.2 L688.5 537.4 L690.8 539.6 L693.0 541.6 L695.1 543.5 L697.2 545.4 L699.1 547.2 L701.0 548.8 L702.7 550.5 L704.4 552.0 L706.0 553.5 L707.6 554.9 L709.0 556.2 L710.4 557.5 L711.8 558.7 L713.1 559.9 L714.3 561.0 L715.5 562.1 L716.7 563.2 L717.8 564.2 L718.9 565.2 L720.0 566.2 L721.0 567.1 L721.9 568.0 L722.9 568.8 L723.7 569.6 L724.6 570.4 L725.4 571.2 L726.2 571.9 L726.9 572.6 L727.6 573.2 L728.3 573.8 L729.0 574.4 L729.6 575.0 L730.1 575.5 L730.6 575.9 L731.1 576.4 L731.6 576.8 L732.0 577.2 L732.5 577.6 L732.9 578.0 L733.3 578.3 L733.6 578.7 L734.0 579.0 L734.3 579.3 L734.6 579.6 L734.9 579.8 L735.1 580.0 L735.4 580.3 L735.6 580.5 L735.8 580.6 L735.9 580.8 L736.1 581.0 L736.3 581.1 L736.5 581.3 L736.6 581.4 L736.8 581.6 L736.9 581.7 L737.1 581.8 L737.2 581.9 L737.3 582.1 L737.4 582.2 L737.6 582.3 L737.7 582.4 L737.8 582.5 L737.9 582.6 L738.1 582.7 L738.2 582.9 L738.3 583.0 L738.4 583.1 L738.5 583.2 L738.6 583.3 L738.7 583.4 L738.8 583.4 L738.9 583.5 L739.0 583.6 L739.0 583.6 L739.1 583.6 L739.1 583.7 L739.1 583.7 L739.2 583.8 L739.2 583.8 L739.2 583.8 L739.3 583.8 L739.3 583.9 L739.3 583.9 L739.3 583.9 L739.3 583.9 Z"/></clipPath></defs>
<path clip-path="url(#lc)" d="M170.5 636.5h10M175.5 631.5v10M170.5 555.5h10M175.5 550.5v10M170.5 473.5h10M175.5 468.5v10M170.5 392.5h10M175.5 387.5v10M170.5 310.5h10M175.5 305.5v10M170.5 229.5h10M175.5 224.5v10M170.5 147.5h10M175.5 142.5v10M258.5 718.5h10M263.5 713.5v10M258.5 636.5h10M263.5 631.5v10M258.5 555.5h10M263.5 550.5v10M258.5 473.5h10M263.5 468.5v10M258.5 392.5h10M263.5 387.5v10M258.5 310.5h10M263.5 305.5v10M258.5 229.5h10M263.5 224.5v10M347.5 718.5h10M352.5 713.5v10M347.5 636.5h10M352.5 631.5v10M347.5 555.5h10M352.5 550.5v10M347.5 473.5h10M352.5 468.5v10M347.5 392.5h10M352.5 387.5v10M347.5 310.5h10M352.5 305.5v10M436.5 636.5h10M441.5 631.5v10M436.5 555.5h10M441.5 550.5v10M436.5 473.5h10M441.5 468.5v10M436.5 392.5h10M441.5 387.5v10M525.5 636.5h10M530.5 631.5v10M525.5 555.5h10M530.5 550.5v10M525.5 473.5h10M530.5 468.5v10M614.5 555.5h10M619.5 550.5v10" stroke="#a4a4a4" stroke-width="1" fill="none"/>
<path d="M241.3 795.9 L241.3 795.9 L241.3 795.9 L241.3 795.9 L241.3 795.9 L241.2 795.9 L241.2 795.9 L241.2 795.9 L241.1 795.9 L241.1 795.9 L241.1 795.9 L241.0 795.9 L241.0 795.9 L240.9 795.9 L240.9 795.9 L240.8 795.9 L240.8 795.9 L240.8 796.0 L240.7 796.0 L240.7 796.0 L240.7 796.0 L240.6 796.0 L240.6 796.0 L240.5 796.0 L240.4 796.0 L240.4 796.0 L240.3 796.0 L240.2 796.0 L240.1 796.0 L240.1 796.0 L240.0 796.0 L239.9 796.0 L239.8 796.0 L239.7 796.0 L239.6 796.0 L239.5 796.0 L239.4 796.0 L239.3 795.9 L239.2 795.9 L239.1 795.9 L238.9 795.8 L238.8 795.7 L238.6 795.6 L238.4 795.5 L238.2 795.4 L238.0 795.2 L237.7 795.1 L237.5 794.9 L237.2 794.7 L237.0 794.5 L236.7 794.3 L236.4 794.1 L236.0 793.8 L235.7 793.6 L235.3 793.3 L234.9 793.0 L234.5 792.6 L234.1 792.3 L233.7 791.9 L233.2 791.5 L232.7 791.1 L232.2 790.7 L231.7 790.2 L231.1 789.7 L230.4 789.2 L229.8 788.7 L229.1 788.1 L228.3 787.5 L227.5 786.9 L226.7 786.2 L225.8 785.5 L224.9 784.8 L223.9 784.0 L222.9 783.2 L221.9 782.3 L220.8 781.4 L219.6 780.4 L218.4 779.4 L217.2 778.2 L215.9 777.0 L214.6 775.7 L213.2 774.4 L211.7 772.9 L210.3 771.3 L208.7 769.5 L207.0 767.5 L205.3 765.2 L203.4 762.6 L201.3 759.7 L199.2 756.4 L196.9 752.9 L194.6 749.0 L192.1 744.7 L189.5 740.0 L186.9 734.9 L184.0 729.2 L181.1 723.0 L178.0 716.2 L174.7 708.7 L171.3 700.6 L167.8 691.9 L164.0 682.4 L160.1 672.2 L156.1 661.2 L151.9 649.3 L147.7 636.5 L143.5 622.8 L139.4 608.4 L135.2 593.0 L131.1 576.8 L127.0 559.7 L122.9 541.8 L118.8 523.2 L114.9 503.9 L111.1 484.0 L107.5 463.9 L104.2 443.5 L101.1 423.0 L98.4 402.4 L96.0 381.9 L93.9 361.5 L92.3 341.4 L91.0 321.8 L90.2 302.8 L89.9 284.5 L90.1 266.7 L90.8 249.6 L92.0 233.1 L93.8 217.4 L96.1 202.7 L99.0 189.1 L102.5 176.5 L106.4 165.1 L110.9 154.9 L115.8 146.1 L121.2 138.7 L126.9 132.7 L133.0 128.0 L139.4 124.5 L145.9 122.2 L152.7 121.0 L159.6 120.7 L166.6 121.4 L173.7 122.8 L180.9 124.7 L188.1 127.2 L195.4 130.0 L202.6 133.1 L209.9 136.5 L217.1 140.0 L224.1 143.7 L231.1 147.5 L237.9 151.3 L244.7 155.3 L251.4 159.3 L258.0 163.5 L264.6 167.7 L271.2 172.1 L277.7 176.5 L284.2 181.1 L290.6 185.7 L297.1 190.4 L303.5 195.2 L310.0 200.1 L316.4 205.1 L322.8 210.1 L329.1 215.2 L335.5 220.4 L341.9 225.6 L348.2 230.9 L354.6 236.2 L361.0 241.6 L367.3 247.0 L373.7 252.4 L380.0 257.9 L386.4 263.4 L392.7 269.0 L399.1 274.6 L405.4 280.2 L411.8 285.8 L418.1 291.4 L424.5 297.1 L430.8 302.8 L437.1 308.4 L443.4 314.1 L449.8 319.8 L456.1 325.5 L462.4 331.2 L468.6 336.9 L474.9 342.6 L481.1 348.2 L487.4 353.9 L493.6 359.5 L499.7 365.2 L505.9 370.8 L512.0 376.3 L518.1 381.9 L524.1 387.4 L530.1 392.9 L536.0 398.3 L541.9 403.7 L547.8 409.0 L553.6 414.3 L559.3 419.6 L565.0 424.8 L570.6 429.9 L576.2 434.9 L581.6 439.9 L587.0 444.9 L592.4 449.7 L597.6 454.5 L602.7 459.2 L607.8 463.8 L612.8 468.4 L617.6 472.8 L622.3 477.1 L626.8 481.2 L631.2 485.2 L635.5 489.1 L639.6 492.9 L643.7 496.6 L647.7 500.3 L651.6 503.8 L655.3 507.3 L659.0 510.6 L662.5 513.8 L665.9 516.9 L669.1 519.8 L672.2 522.6 L675.2 525.3 L678.1 527.9 L680.9 530.5 L683.5 532.9 L686.0 535.2 L688.5 537.4 L690.8 539.6 L693.0 541.6 L695.1 543.5 L697.2 545.4 L699.1 547.2 L701.0 548.8 L702.7 550.5 L704.4 552.0 L706.0 553.5 L707.6 554.9 L709.0 556.2 L710.4 557.5 L711.8 558.7 L713.1 559.9 L714.3 561.0 L715.5 562.1 L716.7 563.2 L717.8 564.2 L718.9 565.2 L720.0 566.2 L721.0 567.1 L721.9 568.0 L722.9 568.8 L723.7 569.6 L724.6 570.4 L725.4 571.2 L726.2 571.9 L726.9 572.6 L727.6 573.2 L728.3 573.8 L729.0 574.4 L729.6 575.0 L730.1 575.5 L730.6 575.9 L731.1 576.4 L731.6 576.8 L732.0 577.2 L732.5 577.6 L732.9 578.0 L733.3 578.3 L733.6 578.7 L734.0 579.0 L734.3 579.3 L734.6 579.6 L734.9 579.8 L735.1 580.0 L735.4 580.3 L735.6 580.5 L735.8 580.6 L735.9 580.8 L736.1 581.0 L736.3 581.1 L736.5 581.3 L736.6 581.4 L736.8 581.6 L736.9 581.7 L737.1 581.8 L737.2 581.9 L737.3 582.1 L737.4 582.2 L737.6 582.3 L737.7 582.4 L737.8 582.5 L737.9 582.6 L738.1 582.7 L738.2 582.9 L738.3 583.0 L738.4 583.1 L738.5 583.2 L738.6 583.3 L738.7 583.4 L738.8 583.4 L738.9 583.5 L739.0 583.6 L739.0 583.6 L739.1 583.6 L739.1 583.7 L739.1 583.7 L739.2 583.8 L739.2 583.8 L739.2 583.8 L739.3 583.8 L739.3 583.9 L739.3 583.9 L739.3 583.9 L739.3 583.9 Z" stroke="#363636" stroke-width="2.6" fill="none" stroke-linejoin="round"/>
<path d="M662.7 530.5 L372.0 313.1 L225.2 746.2 Z" stroke="#222" stroke-width="2.3" stroke-dasharray="2.6 3.1" fill="none"/>
<path d="M671.5 530.4 L374.3 281.8 L224.7 745.8 Z" stroke="#000" stroke-width="2.2" fill="none" stroke-linejoin="miter"/>
<circle cx="391.3" cy="507.4" r="3.2" fill="#555"/>
<circle cx="152.7" cy="121.0" r="5.2" fill="#00e400" stroke="#8a8a8a" stroke-width="1"/>
<circle cx="224.1" cy="143.7" r="5.2" fill="#00f000" stroke="#8a8a8a" stroke-width="1"/>
<circle cx="290.6" cy="185.7" r="5.2" fill="#18e000" stroke="#8a8a8a" stroke-width="1"/>
<circle cx="99.0" cy="189.1" r="5.2" fill="#00e060" stroke="#8a8a8a" stroke-width="1"/>
<circle cx="93.9" cy="361.5" r="5.2" fill="#00c88a" stroke="#8a8a8a" stroke-width="1"/>
<circle cx="418.1" cy="291.4" r="5.2" fill="#76b800" stroke="#8a8a8a" stroke-width="1"/>
<circle cx="541.9" cy="403.7" r="5.2" fill="#a68600" stroke="#8a8a8a" stroke-width="1"/>
<circle cx="643.7" cy="496.6" r="5.2" fill="#c04400" stroke="#8a8a8a" stroke-width="1"/>
<circle cx="701.0" cy="548.8" r="5.2" fill="#d00008" stroke="#8a8a8a" stroke-width="1"/>
<circle cx="739.3" cy="583.9" r="5.2" fill="#d80010" stroke="#8a8a8a" stroke-width="1"/>
<circle cx="127.0" cy="559.7" r="5.2" fill="#0088b8" stroke="#8a8a8a" stroke-width="1"/>
<circle cx="167.8" cy="691.9" r="5.2" fill="#0048c8" stroke="#8a8a8a" stroke-width="1"/>
<circle cx="196.9" cy="752.9" r="5.2" fill="#0000d0" stroke="#8a8a8a" stroke-width="1"/>
<circle cx="240.7" cy="796.0" r="5.2" fill="#3a00d0" stroke="#8a8a8a" stroke-width="1"/>
<path d="M175.5 800V793M175.5 113V120M264.5 800V793M264.5 113V120M353.5 800V793M353.5 113V120M442.5 800V793M442.5 113V120M530.5 800V793M530.5 113V120M619.5 800V793M619.5 113V120M708.5 800V793M708.5 113V120M87 718.5H94M748 718.5H741M87 637.5H94M748 637.5H741M87 555.5H94M748 555.5H741M87 474.5H94M748 474.5H741M87 392.5H94M748 392.5H741M87 311.5H94M748 311.5H741M87 229.5H94M748 229.5H741M87 148.5H94M748 148.5H741" stroke="#000" stroke-width="1" fill="none"/>
<path d="M87.5 113.5H747.5V800.5H87.5Z" stroke="#000" stroke-width="1" fill="none"/>
<path d="M748 113V801M87 800.5H748" stroke="#000" stroke-width="2" fill="none"/>
</svg>
<div class="t" style="left:100.5px;top:114.5px;font-size:17.5px;color:#e8e8e8;">520</div>
<div class="t" style="left:237.5px;top:135.1px;font-size:17.5px;color:#e8e8e8;">530</div>
<div class="t" style="left:304.3px;top:176.5px;font-size:17.5px;color:#e8e8e8;">540</div>
<div class="t" style="left:111.5px;top:179.5px;font-size:17.5px;color:#2e2e2e;">510</div>
<div class="t" style="left:107.5px;top:352.2px;font-size:17.5px;color:#2e2e2e;">500</div>
<div class="t" style="left:430.5px;top:283.3px;font-size:17.5px;color:#e8e8e8;">560</div>
<div class="t" style="left:553.5px;top:393.5px;font-size:17.5px;color:#e8e8e8;">580</div>
<div class="t" style="left:655.5px;top:487.0px;font-size:17.5px;color:#e8e8e8;">600</div>
<div class="t" style="left:711.5px;top:539.0px;font-size:17.5px;color:#e8e8e8;">620</div>
<div class="t" style="left:692.0px;top:572.5px;font-size:17.5px;color:#2e2e2e;">700</div>
<div class="t" style="left:139.2px;top:549.5px;font-size:17.5px;color:#2e2e2e;">490</div>
<div class="t" style="left:121.5px;top:681.5px;font-size:17.5px;color:#e8e8e8;">480</div>
<div class="t" style="left:151.1px;top:742.5px;font-size:17.5px;color:#e8e8e8;">470</div>
<div class="t" style="left:188.4px;top:781.5px;font-size:17.5px;color:#e8e8e8;">400</div>
<div class="t" style="left:56.7px;width:60px;text-align:center;top:806.2px;font-size:17.5px;">0</div>
<div class="t" style="left:145.5px;width:60px;text-align:center;top:806.2px;font-size:17.5px;">0.1</div>
<div class="t" style="left:234.3px;width:60px;text-align:center;top:806.2px;font-size:17.5px;">0.2</div>
<div class="t" style="left:323.2px;width:60px;text-align:center;top:806.2px;font-size:17.5px;">0.3</div>
<div class="t" style="left:412.0px;width:60px;text-align:center;top:806.2px;font-size:17.5px;">0.4</div>
<div class="t" style="left:500.8px;width:60px;text-align:center;top:806.2px;font-size:17.5px;">0.5</div>
<div class="t" style="left:589.7px;width:60px;text-align:center;top:806.2px;font-size:17.5px;">0.6</div>
<div class="t" style="left:678.5px;width:60px;text-align:center;top:806.2px;font-size:17.5px;">0.7</div>
<div class="t" style="left:20.0px;width:60px;text-align:right;top:790.4px;font-size:17.5px;">0</div>
<div class="t" style="left:20.0px;width:60px;text-align:right;top:709.0px;font-size:17.5px;">0.1</div>
<div class="t" style="left:20.0px;width:60px;text-align:right;top:627.5px;font-size:17.5px;">0.2</div>
<div class="t" style="left:20.0px;width:60px;text-align:right;top:546.1px;font-size:17.5px;">0.3</div>
<div class="t" style="left:20.0px;width:60px;text-align:right;top:464.7px;font-size:17.5px;">0.4</div>
<div class="t" style="left:20.0px;width:60px;text-align:right;top:383.2px;font-size:17.5px;">0.5</div>
<div class="t" style="left:20.0px;width:60px;text-align:right;top:301.8px;font-size:17.5px;">0.6</div>
<div class="t" style="left:20.0px;width:60px;text-align:right;top:220.4px;font-size:17.5px;">0.7</div>
<div class="t" style="left:20.0px;width:60px;text-align:right;top:139.0px;font-size:17.5px;">0.8</div>
<div class="t" style="left:399.0px;width:30px;text-align:center;top:829.7px;font-size:18px;font-weight:bold;">x</div>
<div class="t" style="left:24px;top:448px;font-size:17px;font-weight:bold;transform:rotate(-90deg);transform-origin:50% 50%;width:20px;text-align:center">y</div>
<div class="t" style="left:229.0px;width:500px;text-align:right;top:121.2px;font-size:16.4px;font-weight:bold;color:#fff;">Input:  *sRGB</div>
<div class="t" style="left:229.0px;width:500px;text-align:right;top:142.3px;font-size:16.4px;font-weight:bold;color:#fff;">Output: Dell S2722QC_100cd_6500K_gamma22.icm</div>
<div class="t" style="left:229.0px;width:500px;text-align:right;top:163.4px;font-size:16.4px;font-weight:bold;color:#fff;">White point:  x = 0.344  y = 0.358</div>
<div class="t" style="left:229.0px;width:500px;text-align:right;top:184.5px;font-size:16.4px;font-weight:bold;color:#fff;">17-Feb-2022 20:08:33</div>
<div class="t" style="left:166.0px;width:500px;text-align:center;top:81.6px;font-size:19.75px;font-weight:bold;">CIE 1931 xy Chromaticity diagram</div>
<div class="sw" style="left:828px;top:85px;width:351px;height:349px"><b style="top:0px;height:2px;background:linear-gradient(90deg,#ff0000 0.0%,#ff0000 2.4%,#ffff00 16.5%,#33ff00 31.6%,#33ff00 37.0%,#00ffff 49.6%,#0022ff 65.2%,#0022ff 71.2%,#ff00ff 83.2%,#ff0000 96.3%,#ff0000 100.0%)"></b><b style="top:2px;height:2px;background:linear-gradient(90deg,#ff0000 0.0%,#ff0000 2.4%,#ffff00 16.5%,#33ff00 31.6%,#33ff00 36.9%,#00ffff 49.6%,#0022ff 65.2%,#0022ff 71.1%,#ff00ff 83.2%,#ff0000 96.3%,#ff0000 100.0%)"></b><b style="top:4px;height:2px;background:linear-gradient(90deg,#fe0101 0.0%,#fe0101 2.4%,#fefe01 16.5%,#33fe01 31.6%,#33fe01 36.9%,#01fefe 49.6%,#0122fe 65.2%,#0122fe 71.1%,#fe01fe 83.2%,#fe0101 96.4%,#fe0101 100.0%)"></b><b style="top:6px;height:2px;background:linear-gradient(90deg,#fe0101 0.0%,#fe0101 2.3%,#fefe01 16.5%,#33fe01 31.6%,#33fe01 36.8%,#01fefe 49.5%,#0123fe 65.2%,#0123fe 71.0%,#fe01fe 83.2%,#fe0101 96.4%,#fe0101 100.0%)"></b><b style="top:8px;height:2px;background:linear-gradient(90deg,#fe0101 0.0%,#fe0101 2.3%,#fefe01 16.5%,#34fe01 31.6%,#34fe01 36.8%,#01fefe 49.5%,#0123fe 65.2%,#0123fe 71.0%,#fe01fe 83.2%,#fe0101 96.4%,#fe0101 100.0%)"></b><b style="top:10px;height:2px;background:linear-gradient(90deg,#fe0101 0.0%,#fe0101 2.3%,#fefe01 16.5%,#34fe01 31.6%,#34fe01 36.7%,#01fefe 49.5%,#0123fe 65.3%,#0123fe 70.9%,#fe01fe 83.2%,#fe0101 96.4%,#fe0101 100.0%)"></b><b style="top:12px;height:2px;background:linear-gradient(90deg,#fe0101 0.0%,#fe0101 2.3%,#fefe01 16.5%,#34fe01 31.6%,#34fe01 36.7%,#01fefe 49.5%,#0123fe 65.3%,#0123fe 70.9%,#fe01fe 83.2%,#fe0101 96.5%,#fe0101 100.0%)"></b><b style="top:14px;height:2px;background:linear-gradient(90deg,#fd0202 0.0%,#fd0202 2.3%,#fdfd02 16.5%,#34fd02 31.5%,#34fd02 36.6%,#02fdfd 49.5%,#0223fd 65.3%,#0223fd 70.8%,#fd02fd 83.2%,#fd0202 96.5%,#fd0202 100.0%)"></b><b style="top:16px;height:2px;background:linear-gradient(90deg,#fd0202 0.0%,#fd0202 2.3%,#fdfd02 16.5%,#34fd02 31.5%,#34fd02 36.6%,#02fdfd 49.5%,#0223fd 65.3%,#0223fd 70.8%,#fd02fd 83.2%,#fd0202 96.5%,#fd0202 100.0%)"></b><b style="top:18px;height:2px;background:linear-gradient(90deg,#fd0202 0.0%,#fd0202 2.2%,#fdfd02 16.4%,#34fd02 31.5%,#34fd02 36.5%,#02fdfd 49.4%,#0224fd 65.3%,#0224fd 70.7%,#fd02fd 83.2%,#fd0202 96.5%,#fd0202 100.0%)"></b><b style="top:20px;height:2px;background:linear-gradient(90deg,#fd0202 0.0%,#fd0202 2.2%,#fdfd02 16.4%,#34fd02 31.5%,#34fd02 36.5%,#02fdfd 49.4%,#0224fd 65.3%,#0224fd 70.6%,#fd02fd 83.2%,#fd0202 96.6%,#fd0202 100.0%)"></b><b style="top:22px;height:2px;background:linear-gradient(90deg,#fc0303 0.0%,#fc0303 2.2%,#fcfc03 16.4%,#35fc03 31.5%,#35fc03 36.4%,#03fcfc 49.4%,#0324fc 65.3%,#0324fc 70.6%,#fc03fc 83.2%,#fc0303 96.6%,#fc0303 100.0%)"></b><b style="top:24px;height:2px;background:linear-gradient(90deg,#fc0303 0.0%,#fc0303 2.2%,#fcfc03 16.4%,#35fc03 31.5%,#35fc03 36.4%,#03fcfc 49.4%,#0324fc 65.3%,#0324fc 70.5%,#fc03fc 83.2%,#fc0303 96.6%,#fc0303 100.0%)"></b><b style="top:26px;height:2px;background:linear-gradient(90deg,#fc0303 0.0%,#fc0303 2.2%,#fcfc03 16.4%,#35fc03 31.5%,#35fc03 36.3%,#03fcfc 49.4%,#0324fc 65.3%,#0324fc 70.5%,#fc03fc 83.2%,#fc0303 96.6%,#fc0303 100.0%)"></b><b style="top:28px;height:2px;background:linear-gradient(90deg,#fc0303 0.0%,#fc0303 2.2%,#fcfc03 16.4%,#35fc03 31.5%,#35fc03 36.3%,#03fcfc 49.4%,#0324fc 65.3%,#0324fc 70.4%,#fc03fc 83.2%,#fc0303 96.7%,#fc0303 100.0%)"></b><b style="top:30px;height:2px;background:linear-gradient(90deg,#fc0303 0.0%,#fc0303 2.2%,#fcfc03 16.4%,#35fc03 31.5%,#35fc03 36.2%,#03fcfc 49.4%,#0325fc 65.3%,#0325fc 70.4%,#fc03fc 83.2%,#fc0303 96.7%,#fc0303 100.0%)"></b><b style="top:32px;height:2px;background:linear-gradient(90deg,#fb0404 0.0%,#fb0404 2.1%,#fbfb04 16.4%,#35fb04 31.5%,#35fb04 36.1%,#04fbfb 49.3%,#0425fb 65.4%,#0425fb 70.3%,#fb04fb 83.2%,#fb0404 96.7%,#fb0404 100.0%)"></b><b style="top:34px;height:2px;background:linear-gradient(90deg,#fb0404 0.0%,#fb0404 2.1%,#fbfb04 16.4%,#35fb04 31.5%,#35fb04 36.1%,#04fbfb 49.3%,#0425fb 65.4%,#0425fb 70.3%,#fb04fb 83.2%,#fb0404 96.7%,#fb0404 100.0%)"></b><b style="top:36px;height:2px;background:linear-gradient(90deg,#fb0404 0.0%,#fb0404 2.1%,#fbfb04 16.4%,#35fb04 31.5%,#35fb04 36.0%,#04fbfb 49.3%,#0425fb 65.4%,#0425fb 70.2%,#fb04fb 83.2%,#fb0404 96.8%,#fb0404 100.0%)"></b><b style="top:38px;height:2px;background:linear-gradient(90deg,#fb0404 0.0%,#fb0404 2.1%,#fbfb04 16.4%,#36fb04 31.5%,#36fb04 36.0%,#04fbfb 49.3%,#0425fb 65.4%,#0425fb 70.2%,#fb04fb 83.2%,#fb0404 96.8%,#fb0404 100.0%)"></b><b style="top:40px;height:2px;background:linear-gradient(90deg,#fb0505 0.0%,#fb0505 2.1%,#fbfb05 16.4%,#36fb05 31.5%,#36fb05 35.9%,#05fbfb 49.3%,#0525fb 65.4%,#0525fb 70.1%,#fb05fb 83.2%,#fb0505 96.8%,#fb0505 100.0%)"></b><b style="top:42px;height:2px;background:linear-gradient(90deg,#fa0505 0.0%,#fa0505 2.1%,#fafa05 16.4%,#36fa05 31.5%,#36fa05 35.9%,#05fafa 49.3%,#0525fa 65.4%,#0525fa 70.1%,#fa05fa 83.2%,#fa0505 96.8%,#fa0505 100.0%)"></b><b style="top:44px;height:2px;background:linear-gradient(90deg,#fa0505 0.0%,#fa0505 2.0%,#fafa05 16.4%,#36fa05 31.4%,#36fa05 35.8%,#05fafa 49.2%,#0526fa 65.4%,#0526fa 70.0%,#fa05fa 83.1%,#fa0505 96.9%,#fa0505 100.0%)"></b><b style="top:46px;height:2px;background:linear-gradient(90deg,#fa0505 0.0%,#fa0505 2.0%,#fafa05 16.4%,#36fa05 31.4%,#36fa05 35.8%,#05fafa 49.2%,#0526fa 65.4%,#0526fa 70.0%,#fa05fa 83.1%,#fa0505 96.9%,#fa0505 100.0%)"></b><b style="top:48px;height:2px;background:linear-gradient(90deg,#fa0505 0.0%,#fa0505 2.0%,#fafa05 16.4%,#36fa05 31.4%,#36fa05 35.7%,#05fafa 49.2%,#0526fa 65.4%,#0526fa 69.9%,#fa05fa 83.1%,#fa0505 96.9%,#fa0505 100.0%)"></b><b style="top:50px;height:2px;background:linear-gradient(90deg,#f90606 0.0%,#f90606 2.0%,#f9f906 16.4%,#36f906 31.4%,#36f906 35.7%,#06f9f9 49.2%,#0626f9 65.4%,#0626f9 69.9%,#f906f9 83.1%,#f90606 96.9%,#f90606 100.0%)"></b><b style="top:52px;height:2px;background:linear-gradient(90deg,#f90606 0.0%,#f90606 2.0%,#f9f906 16.3%,#37f906 31.4%,#37f906 35.6%,#06f9f9 49.2%,#0626f9 65.4%,#0626f9 69.8%,#f906f9 83.1%,#f90606 97.0%,#f90606 100.0%)"></b><b style="top:54px;height:2px;background:linear-gradient(90deg,#f90606 0.0%,#f90606 2.0%,#f9f906 16.3%,#37f906 31.4%,#37f906 35.6%,#06f9f9 49.2%,#0626f9 65.5%,#0626f9 69.8%,#f906f9 83.1%,#f90606 97.0%,#f90606 100.0%)"></b><b style="top:56px;height:2px;background:linear-gradient(90deg,#f90606 0.0%,#f90606 1.9%,#f9f906 16.3%,#37f906 31.4%,#37f906 35.5%,#06f9f9 49.1%,#0627f9 65.5%,#0627f9 69.7%,#f906f9 83.1%,#f90606 97.0%,#f90606 100.0%)"></b><b style="top:58px;height:2px;background:linear-gradient(90deg,#f90606 0.0%,#f90606 1.9%,#f9f906 16.3%,#37f906 31.4%,#37f906 35.5%,#06f9f9 49.1%,#0627f9 65.5%,#0627f9 69.6%,#f906f9 83.1%,#f90606 97.0%,#f90606 100.0%)"></b><b style="top:60px;height:2px;background:linear-gradient(90deg,#f80707 0.0%,#f80707 1.9%,#f8f807 16.3%,#37f807 31.4%,#37f807 35.4%,#07f8f8 49.1%,#0727f8 65.5%,#0727f8 69.6%,#f807f8 83.1%,#f80707 97.1%,#f80707 100.0%)"></b><b style="top:62px;height:2px;background:linear-gradient(90deg,#f80707 0.0%,#f80707 1.9%,#f8f807 16.3%,#37f807 31.4%,#37f807 35.4%,#07f8f8 49.1%,#0727f8 65.5%,#0727f8 69.5%,#f807f8 83.1%,#f80707 97.1%,#f80707 100.0%)"></b><b style="top:64px;height:2px;background:linear-gradient(90deg,#f80707 0.0%,#f80707 1.9%,#f8f807 16.3%,#37f807 31.4%,#37f807 35.3%,#07f8f8 49.1%,#0727f8 65.5%,#0727f8 69.5%,#f807f8 83.1%,#f80707 97.1%,#f80707 100.0%)"></b><b style="top:66px;height:2px;background:linear-gradient(90deg,#f80707 0.0%,#f80707 1.9%,#f8f807 16.3%,#37f807 31.4%,#37f807 35.3%,#07f8f8 49.1%,#0727f8 65.5%,#0727f8 69.4%,#f807f8 83.1%,#f80707 97.1%,#f80707 100.0%)"></b><b style="top:68px;height:2px;background:linear-gradient(90deg,#f70808 0.0%,#f70808 1.8%,#f7f708 16.3%,#38f708 31.4%,#38f708 35.2%,#08f7f7 49.0%,#0828f7 65.5%,#0828f7 69.4%,#f708f7 83.1%,#f70808 97.2%,#f70808 100.0%)"></b><b style="top:70px;height:2px;background:linear-gradient(90deg,#f70808 0.0%,#f70808 1.8%,#f7f708 16.3%,#38f708 31.4%,#38f708 35.2%,#08f7f7 49.0%,#0828f7 65.5%,#0828f7 69.3%,#f708f7 83.1%,#f70808 97.2%,#f70808 100.0%)"></b><b style="top:72px;height:2px;background:linear-gradient(90deg,#f60909 0.0%,#f60909 1.8%,#f6f609 16.3%,#38f609 31.3%,#38f609 35.1%,#09f6f6 49.0%,#0928f6 65.5%,#0928f6 69.3%,#f609f6 83.1%,#f60909 97.2%,#f60909 100.0%)"></b><b style="top:74px;height:2px;background:linear-gradient(90deg,#f60909 0.0%,#f60909 1.8%,#f6f609 16.3%,#39f609 31.3%,#39f609 35.1%,#09f6f6 49.0%,#0929f6 65.5%,#0929f6 69.2%,#f609f6 83.1%,#f60909 97.2%,#f60909 100.0%)"></b><b style="top:76px;height:2px;background:linear-gradient(90deg,#f50a0a 0.0%,#f50a0a 1.8%,#f5f50a 16.3%,#39f50a 31.3%,#39f50a 35.0%,#0af5f5 49.0%,#0a29f5 65.6%,#0a29f5 69.2%,#f50af5 83.1%,#f50a0a 97.3%,#f50a0a 100.0%)"></b><b style="top:78px;height:2px;background:linear-gradient(90deg,#f50b0b 0.0%,#f50b0b 1.8%,#f5f50b 16.3%,#39f50b 31.3%,#39f50b 35.0%,#0bf5f5 49.0%,#0b2af5 65.6%,#0b2af5 69.1%,#f50bf5 83.1%,#f50b0b 97.3%,#f50b0b 100.0%)"></b><b style="top:80px;height:2px;background:linear-gradient(90deg,#f40b0b 0.0%,#f40b0b 1.8%,#f4f40b 16.3%,#3af40b 31.3%,#3af40b 34.9%,#0bf4f4 49.0%,#0b2af4 65.6%,#0b2af4 69.1%,#f40bf4 83.1%,#f40b0b 97.3%,#f40b0b 100.0%)"></b><b style="top:82px;height:2px;background:linear-gradient(90deg,#f30c0c 0.0%,#f30c0c 1.7%,#f3f30c 16.3%,#3af30c 31.3%,#3af30c 34.9%,#0cf3f3 48.9%,#0c2bf3 65.6%,#0c2bf3 69.0%,#f30cf3 83.1%,#f30c0c 97.3%,#f30c0c 100.0%)"></b><b style="top:84px;height:2px;background:linear-gradient(90deg,#f30c0c 0.0%,#f30c0c 1.7%,#f3f30c 16.3%,#3af30c 31.3%,#3af30c 34.8%,#0cf3f3 48.9%,#0c2bf3 65.6%,#0c2bf3 69.0%,#f30cf3 83.1%,#f30c0c 97.4%,#f30c0c 100.0%)"></b><b style="top:86px;height:2px;background:linear-gradient(90deg,#f20d0d 0.0%,#f20d0d 1.7%,#f2f20d 16.3%,#3bf20d 31.3%,#3bf20d 34.8%,#0df2f2 48.9%,#0d2cf2 65.6%,#0d2cf2 68.9%,#f20df2 83.1%,#f20d0d 97.4%,#f20d0d 100.0%)"></b><b style="top:88px;height:2px;background:linear-gradient(90deg,#f10e0e 0.0%,#f10e0e 1.7%,#f1f10e 16.2%,#3bf10e 31.3%,#3bf10e 34.7%,#0ef1f1 48.9%,#0e2cf1 65.6%,#0e2cf1 68.9%,#f10ef1 83.1%,#f10e0e 97.4%,#f10e0e 100.0%)"></b><b style="top:90px;height:2px;background:linear-gradient(90deg,#f10e0e 0.0%,#f10e0e 1.7%,#f1f10e 16.2%,#3cf10e 31.3%,#3cf10e 34.7%,#0ef1f1 48.9%,#0e2df1 65.6%,#0e2df1 68.8%,#f10ef1 83.1%,#f10e0e 97.4%,#f10e0e 100.0%)"></b><b style="top:92px;height:2px;background:linear-gradient(90deg,#f00f0f 0.0%,#f00f0f 1.7%,#f0f00f 16.2%,#3cf00f 31.3%,#3cf00f 34.6%,#0ff0f0 48.9%,#0f2df0 65.6%,#0f2df0 68.7%,#f00ff0 83.1%,#f00f0f 97.5%,#f00f0f 100.0%)"></b><b style="top:94px;height:2px;background:linear-gradient(90deg,#f01010 0.0%,#f01010 1.6%,#f0f010 16.2%,#3cf010 31.3%,#3cf010 34.6%,#10f0f0 48.8%,#102df0 65.6%,#102df0 68.7%,#f010f0 83.1%,#f01010 97.5%,#f01010 100.0%)"></b><b style="top:96px;height:2px;background:linear-gradient(90deg,#ef1010 0.0%,#ef1010 1.6%,#efef10 16.2%,#3def10 31.3%,#3def10 34.5%,#10efef 48.8%,#102eef 65.6%,#102eef 68.6%,#ef10ef 83.1%,#ef1010 97.5%,#ef1010 100.0%)"></b><b style="top:98px;height:2px;background:linear-gradient(90deg,#ee1111 0.0%,#ee1111 1.6%,#eeee11 16.2%,#3dee11 31.3%,#3dee11 34.4%,#11eeee 48.8%,#112eee 65.7%,#112eee 68.6%,#ee11ee 83.1%,#ee1111 97.5%,#ee1111 100.0%)"></b><b style="top:100px;height:2px;background:linear-gradient(90deg,#ee1111 0.0%,#ee1111 1.6%,#eeee11 16.2%,#3dee11 31.3%,#3dee11 34.4%,#11eeee 48.8%,#112fee 65.7%,#112fee 68.5%,#ee11ee 83.1%,#ee1111 97.6%,#ee1111 100.0%)"></b><b style="top:102px;height:2px;background:linear-gradient(90deg,#ed1212 0.0%,#ed1212 1.6%,#eded12 16.2%,#3eed12 31.2%,#3eed12 34.3%,#12eded 48.8%,#122fed 65.7%,#122fed 68.5%,#ed12ed 83.1%,#ed1212 97.6%,#ed1212 100.0%)"></b><b style="top:104px;height:2px;background:linear-gradient(90deg,#ec1313 0.0%,#ec1313 1.6%,#ecec13 16.2%,#3eec13 31.2%,#3eec13 34.3%,#13ecec 48.8%,#1330ec 65.7%,#1330ec 68.4%,#ec13ec 83.1%,#ec1313 97.6%,#ec1313 100.0%)"></b><b style="top:106px;height:2px;background:linear-gradient(90deg,#ec1313 0.0%,#ec1313 1.5%,#ecec13 16.2%,#3fec13 31.2%,#3fec13 34.2%,#13ecec 48.7%,#1330ec 65.7%,#1330ec 68.4%,#ec13ec 83.1%,#ec1313 97.6%,#ec1313 100.0%)"></b><b style="top:108px;height:2px;background:linear-gradient(90deg,#eb1414 0.0%,#eb1414 1.5%,#ebeb14 16.2%,#3feb14 31.2%,#3feb14 34.2%,#14ebeb 48.7%,#1431eb 65.7%,#1431eb 68.3%,#eb14eb 83.1%,#eb1414 97.7%,#eb1414 100.0%)"></b><b style="top:110px;height:2px;background:linear-gradient(90deg,#eb1515 0.0%,#eb1515 1.5%,#ebeb15 16.2%,#3feb15 31.2%,#3feb15 34.1%,#15ebeb 48.7%,#1531eb 65.7%,#1531eb 68.3%,#eb15eb 83.1%,#eb1515 97.7%,#eb1515 100.0%)"></b><b style="top:112px;height:2px;background:linear-gradient(90deg,#ea1515 0.0%,#ea1515 1.5%,#eaea15 16.2%,#40ea15 31.2%,#40ea15 34.1%,#15eaea 48.7%,#1532ea 65.7%,#1532ea 68.2%,#ea15ea 83.1%,#ea1515 97.7%,#ea1515 100.0%)"></b><b style="top:114px;height:2px;background:linear-gradient(90deg,#e91616 0.0%,#e91616 1.5%,#e9e916 16.2%,#40e916 31.2%,#40e916 34.0%,#16e9e9 48.7%,#1632e9 65.7%,#1632e9 68.2%,#e916e9 83.1%,#e91616 97.7%,#e91616 100.0%)"></b><b style="top:116px;height:2px;background:linear-gradient(90deg,#e91616 0.0%,#e91616 1.5%,#e9e916 16.2%,#40e916 31.2%,#40e916 34.0%,#16e9e9 48.7%,#1632e9 65.7%,#1632e9 68.1%,#e916e9 83.1%,#e91616 97.8%,#e91616 100.0%)"></b><b style="top:118px;height:2px;background:linear-gradient(90deg,#e81717 0.0%,#e81717 1.4%,#e8e817 16.2%,#41e817 31.2%,#41e817 33.9%,#17e8e8 48.6%,#1733e8 65.7%,#1733e8 68.1%,#e817e8 83.1%,#e81717 97.8%,#e81717 100.0%)"></b><b style="top:120px;height:2px;background:linear-gradient(90deg,#e81818 0.0%,#e81818 1.4%,#e8e818 16.2%,#41e818 31.2%,#41e818 33.9%,#18e8e8 48.6%,#1833e8 65.8%,#1833e8 68.0%,#e818e8 83.1%,#e81818 97.8%,#e81818 100.0%)"></b><b style="top:122px;height:2px;background:linear-gradient(90deg,#e71818 0.0%,#e71818 1.4%,#e7e718 16.1%,#42e718 31.2%,#42e718 33.8%,#18e7e7 48.6%,#1834e7 65.8%,#1834e7 68.0%,#e718e7 83.1%,#e71818 97.9%,#e71818 100.0%)"></b><b style="top:124px;height:2px;background:linear-gradient(90deg,#e61919 0.0%,#e61919 1.4%,#e6e619 16.1%,#42e619 31.2%,#42e619 33.8%,#19e6e6 48.6%,#1934e6 65.8%,#1934e6 67.9%,#e619e6 83.1%,#e61919 97.9%,#e61919 100.0%)"></b><b style="top:126px;height:2px;background:linear-gradient(90deg,#e61a1a 0.0%,#e61a1a 1.4%,#e6e61a 16.1%,#42e61a 31.2%,#42e61a 33.7%,#1ae6e6 48.6%,#1a35e6 65.8%,#1a35e6 67.9%,#e61ae6 83.1%,#e61a1a 97.9%,#e61a1a 100.0%)"></b><b style="top:128px;height:2px;background:linear-gradient(90deg,#e51a1a 0.0%,#e51a1a 1.4%,#e5e51a 16.1%,#43e51a 31.2%,#43e51a 33.7%,#1ae5e5 48.6%,#1a35e5 65.8%,#1a35e5 67.8%,#e51ae5 83.1%,#e51a1a 97.9%,#e51a1a 100.0%)"></b><b style="top:130px;height:2px;background:linear-gradient(90deg,#e41b1b 0.0%,#e41b1b 1.3%,#e4e41b 16.1%,#43e41b 31.1%,#43e41b 33.6%,#1be4e4 48.5%,#1b36e4 65.8%,#1b36e4 67.7%,#e41be4 83.0%,#e41b1b 98.0%,#e41b1b 100.0%)"></b><b style="top:132px;height:2px;background:linear-gradient(90deg,#e41b1b 0.0%,#e41b1b 1.3%,#e4e41b 16.1%,#43e41b 31.1%,#43e41b 33.6%,#1be4e4 48.5%,#1b36e4 65.8%,#1b36e4 67.7%,#e41be4 83.0%,#e41b1b 98.0%,#e41b1b 100.0%)"></b><b style="top:134px;height:2px;background:linear-gradient(90deg,#e31c1c 0.0%,#e31c1c 1.3%,#e3e31c 16.1%,#44e31c 31.1%,#44e31c 33.5%,#1ce3e3 48.5%,#1c37e3 65.8%,#1c37e3 67.6%,#e31ce3 83.0%,#e31c1c 98.0%,#e31c1c 100.0%)"></b><b style="top:136px;height:2px;background:linear-gradient(90deg,#e31d1d 0.0%,#e31d1d 1.3%,#e3e31d 16.1%,#44e31d 31.1%,#44e31d 33.5%,#1de3e3 48.5%,#1d37e3 65.8%,#1d37e3 67.6%,#e31de3 83.0%,#e31d1d 98.0%,#e31d1d 100.0%)"></b><b style="top:138px;height:2px;background:linear-gradient(90deg,#e21d1d 0.0%,#e21d1d 1.3%,#e2e21d 16.1%,#45e21d 31.1%,#45e21d 33.4%,#1de2e2 48.5%,#1d38e2 65.8%,#1d38e2 67.5%,#e21de2 83.0%,#e21d1d 98.1%,#e21d1d 100.0%)"></b><b style="top:140px;height:2px;background:linear-gradient(90deg,#e11e1e 0.0%,#e11e1e 1.3%,#e1e11e 16.1%,#45e11e 31.1%,#45e11e 33.4%,#1ee1e1 48.5%,#1e38e1 65.8%,#1e38e1 67.5%,#e11ee1 83.0%,#e11e1e 98.1%,#e11e1e 100.0%)"></b><b style="top:142px;height:2px;background:linear-gradient(90deg,#e11f1f 0.0%,#e11f1f 1.3%,#e1e11f 16.1%,#45e11f 31.1%,#45e11f 33.3%,#1fe1e1 48.5%,#1f38e1 65.9%,#1f38e1 67.4%,#e11fe1 83.0%,#e11f1f 98.1%,#e11f1f 100.0%)"></b><b style="top:144px;height:2px;background:linear-gradient(90deg,#e01f1f 0.0%,#e01f1f 1.2%,#e0e01f 16.1%,#46e01f 31.1%,#46e01f 33.3%,#1fe0e0 48.4%,#1f39e0 65.9%,#1f39e0 67.4%,#e01fe0 83.0%,#e01f1f 98.1%,#e01f1f 100.0%)"></b><b style="top:146px;height:2px;background:linear-gradient(90deg,#df2020 0.0%,#df2020 1.2%,#dfdf20 16.1%,#46df20 31.1%,#46df20 33.2%,#20dfdf 48.4%,#2039df 65.9%,#2039df 67.3%,#df20df 83.0%,#df2020 98.2%,#df2020 100.0%)"></b><b style="top:148px;height:2px;background:linear-gradient(90deg,#df2020 0.0%,#df2020 1.2%,#dfdf20 16.1%,#47df20 31.1%,#47df20 33.2%,#20dfdf 48.4%,#203adf 65.9%,#203adf 67.3%,#df20df 83.0%,#df2020 98.2%,#df2020 100.0%)"></b><b style="top:150px;height:2px;background:linear-gradient(90deg,#de2121 0.0%,#de2121 1.2%,#dede21 16.1%,#47de21 31.1%,#47de21 33.1%,#21dede 48.4%,#213ade 65.9%,#213ade 67.2%,#de21de 83.0%,#de2121 98.2%,#de2121 100.0%)"></b><b style="top:152px;height:2px;background:linear-gradient(90deg,#de2222 0.0%,#de2222 1.2%,#dede22 16.1%,#47de22 31.1%,#47de22 33.1%,#22dede 48.4%,#223bde 65.9%,#223bde 67.2%,#de22de 83.0%,#de2222 98.2%,#de2222 100.0%)"></b><b style="top:154px;height:2px;background:linear-gradient(90deg,#dd2222 0.0%,#dd2222 1.2%,#dddd22 16.1%,#48dd22 31.1%,#48dd22 33.0%,#22dddd 48.4%,#223bdd 65.9%,#223bdd 67.1%,#dd22dd 83.0%,#dd2222 98.3%,#dd2222 100.0%)"></b><b style="top:156px;height:2px;background:linear-gradient(90deg,#dc2323 0.0%,#dc2323 1.1%,#dcdc23 16.1%,#48dc23 31.1%,#48dc23 33.0%,#23dcdc 48.3%,#233cdc 65.9%,#233cdc 67.1%,#dc23dc 83.0%,#dc2323 98.3%,#dc2323 100.0%)"></b><b style="top:158px;height:2px;background:linear-gradient(90deg,#dc2424 0.0%,#dc2424 1.1%,#dcdc24 16.0%,#48dc24 31.1%,#48dc24 32.9%,#24dcdc 48.3%,#243cdc 65.9%,#243cdc 67.0%,#dc24dc 83.0%,#dc2424 98.3%,#dc2424 100.0%)"></b><b style="top:160px;height:2px;background:linear-gradient(90deg,#db2424 0.0%,#db2424 1.1%,#dbdb24 16.0%,#49db24 31.0%,#49db24 32.8%,#24dbdb 48.3%,#243ddb 65.9%,#243ddb 67.0%,#db24db 83.0%,#db2424 98.3%,#db2424 100.0%)"></b><b style="top:162px;height:2px;background:linear-gradient(90deg,#da2525 0.0%,#da2525 1.1%,#dada25 16.0%,#49da25 31.0%,#49da25 32.8%,#25dada 48.3%,#253dda 65.9%,#253dda 66.9%,#da25da 83.0%,#da2525 98.4%,#da2525 100.0%)"></b><b style="top:164px;height:2px;background:linear-gradient(90deg,#da2626 0.0%,#da2626 1.1%,#dada26 16.0%,#4ada26 31.0%,#4ada26 32.7%,#26dada 48.3%,#263eda 66.0%,#263eda 66.9%,#da26da 83.0%,#da2626 98.4%,#da2626 100.0%)"></b><b style="top:166px;height:2px;background:linear-gradient(90deg,#d92727 0.0%,#d92727 1.1%,#d9d927 16.0%,#4ad927 31.0%,#4ad927 32.7%,#27d9d9 48.3%,#273ed9 66.0%,#273ed9 66.8%,#d927d9 83.0%,#d92727 98.4%,#d92727 100.0%)"></b><b style="top:168px;height:2px;background:linear-gradient(90deg,#d82828 0.0%,#d82828 1.0%,#d8d828 16.0%,#4bd828 31.0%,#4bd828 32.6%,#28d8d8 48.2%,#283fd8 66.0%,#283fd8 66.7%,#d828d8 83.0%,#d82828 98.4%,#d82828 100.0%)"></b><b style="top:170px;height:2px;background:linear-gradient(90deg,#d62929 0.0%,#d62929 1.0%,#d6d629 16.0%,#4cd629 31.0%,#4cd629 32.6%,#29d6d6 48.2%,#2940d6 66.0%,#2940d6 66.7%,#d629d6 83.0%,#d62929 98.5%,#d62929 100.0%)"></b><b style="top:172px;height:2px;background:linear-gradient(90deg,#d52a2a 0.0%,#d52a2a 1.0%,#d5d52a 16.0%,#4cd52a 31.0%,#4cd52a 32.5%,#2ad5d5 48.2%,#2a41d5 66.0%,#2a41d5 66.6%,#d52ad5 83.0%,#d52a2a 98.5%,#d52a2a 100.0%)"></b><b style="top:174px;height:2px;background:linear-gradient(90deg,#d42b2b 0.0%,#d42b2b 1.0%,#d4d42b 16.0%,#4dd42b 31.0%,#4dd42b 32.5%,#2bd4d4 48.2%,#2b42d4 66.0%,#2b42d4 66.6%,#d42bd4 83.0%,#d42b2b 98.5%,#d42b2b 100.0%)"></b><b style="top:176px;height:2px;background:linear-gradient(90deg,#d32c2c 0.0%,#d32c2c 1.0%,#d3d32c 16.0%,#4ed32c 31.0%,#4ed32c 32.5%,#2cd3d3 48.2%,#2c42d3 66.0%,#2c42d3 66.6%,#d32cd3 83.0%,#d32c2c 98.5%,#d32c2c 100.0%)"></b><b style="top:178px;height:2px;background:linear-gradient(90deg,#d22d2d 0.0%,#d22d2d 1.0%,#d2d22d 16.0%,#4ed22d 31.0%,#4ed22d 32.5%,#2dd2d2 48.2%,#2d43d2 66.0%,#2d43d2 66.6%,#d22dd2 83.0%,#d22d2d 98.5%,#d22d2d 100.0%)"></b><b style="top:180px;height:2px;background:linear-gradient(90deg,#d12e2e 0.0%,#d12e2e 1.0%,#d1d12e 16.0%,#4fd12e 31.0%,#4fd12e 32.5%,#2ed1d1 48.2%,#2e44d1 66.0%,#2e44d1 66.6%,#d12ed1 83.0%,#d12e2e 98.5%,#d12e2e 100.0%)"></b><b style="top:182px;height:2px;background:linear-gradient(90deg,#d02f2f 0.0%,#d02f2f 1.0%,#d0d02f 16.0%,#4fd02f 31.0%,#4fd02f 32.5%,#2fd0d0 48.2%,#2f45d0 66.0%,#2f45d0 66.6%,#d02fd0 83.0%,#d02f2f 98.5%,#d02f2f 100.0%)"></b><b style="top:184px;height:2px;background:linear-gradient(90deg,#cf3030 0.0%,#cf3030 1.0%,#cfcf30 16.0%,#50cf30 31.0%,#50cf30 32.5%,#30cfcf 48.2%,#3046cf 66.0%,#3046cf 66.6%,#cf30cf 83.0%,#cf3030 98.5%,#cf3030 100.0%)"></b><b style="top:186px;height:2px;background:linear-gradient(90deg,#ce3131 0.0%,#ce3131 1.0%,#cece31 16.0%,#51ce31 31.0%,#51ce31 32.5%,#31cece 48.2%,#3146ce 66.0%,#3146ce 66.6%,#ce31ce 83.0%,#ce3131 98.5%,#ce3131 100.0%)"></b><b style="top:188px;height:2px;background:linear-gradient(90deg,#cd3333 0.0%,#cd3333 1.0%,#cdcd33 16.0%,#51cd33 31.0%,#51cd33 32.5%,#33cdcd 48.2%,#3347cd 66.0%,#3347cd 66.6%,#cd33cd 83.0%,#cd3333 98.5%,#cd3333 100.0%)"></b><b style="top:190px;height:2px;background:linear-gradient(90deg,#cc3434 0.0%,#cc3434 1.0%,#cccc34 16.0%,#52cc34 31.0%,#52cc34 32.5%,#34cccc 48.2%,#3448cc 66.0%,#3448cc 66.6%,#cc34cc 83.0%,#cc3434 98.5%,#cc3434 100.0%)"></b><b style="top:192px;height:2px;background:linear-gradient(90deg,#cb3535 0.0%,#cb3535 1.0%,#cbcb35 16.0%,#53cb35 31.0%,#53cb35 32.5%,#35cbcb 48.2%,#3549cb 66.0%,#3549cb 66.6%,#cb35cb 83.0%,#cb3535 98.5%,#cb3535 100.0%)"></b><b style="top:194px;height:2px;background:linear-gradient(90deg,#ca3636 0.0%,#ca3636 1.0%,#caca36 16.0%,#53ca36 31.0%,#53ca36 32.5%,#36caca 48.2%,#3649ca 66.0%,#3649ca 66.6%,#ca36ca 83.0%,#ca3636 98.5%,#ca3636 100.0%)"></b><b style="top:196px;height:2px;background:linear-gradient(90deg,#c93737 0.0%,#c93737 1.0%,#c9c937 16.0%,#54c937 31.0%,#54c937 32.5%,#37c9c9 48.2%,#374ac9 66.0%,#374ac9 66.6%,#c937c9 83.0%,#c93737 98.5%,#c93737 100.0%)"></b><b style="top:198px;height:2px;background:linear-gradient(90deg,#c83838 0.0%,#c83838 1.0%,#c8c838 16.0%,#55c838 31.0%,#55c838 32.5%,#38c8c8 48.2%,#384bc8 66.0%,#384bc8 66.6%,#c838c8 83.0%,#c83838 98.5%,#c83838 100.0%)"></b><b style="top:200px;height:2px;background:linear-gradient(90deg,#c73939 0.0%,#c73939 1.0%,#c7c739 16.0%,#55c739 31.0%,#55c739 32.5%,#39c7c7 48.2%,#394cc7 66.0%,#394cc7 66.6%,#c739c7 83.0%,#c73939 98.5%,#c73939 100.0%)"></b><b style="top:202px;height:2px;background:linear-gradient(90deg,#c53a3a 0.0%,#c53a3a 1.0%,#c5c53a 16.0%,#56c53a 31.0%,#56c53a 32.5%,#3ac5c5 48.2%,#3a4dc5 66.0%,#3a4dc5 66.6%,#c53ac5 83.0%,#c53a3a 98.5%,#c53a3a 100.0%)"></b><b style="top:204px;height:2px;background:linear-gradient(90deg,#c43b3b 0.0%,#c43b3b 1.0%,#c4c43b 16.0%,#57c43b 31.0%,#57c43b 32.5%,#3bc4c4 48.2%,#3b4dc4 66.0%,#3b4dc4 66.6%,#c43bc4 83.0%,#c43b3b 98.5%,#c43b3b 100.0%)"></b><b style="top:206px;height:2px;background:linear-gradient(90deg,#c33c3c 0.0%,#c33c3c 1.0%,#c3c33c 16.0%,#57c33c 31.0%,#57c33c 32.5%,#3cc3c3 48.2%,#3c4ec3 66.0%,#3c4ec3 66.6%,#c33cc3 83.0%,#c33c3c 98.5%,#c33c3c 100.0%)"></b><b style="top:208px;height:2px;background:linear-gradient(90deg,#c23d3d 0.0%,#c23d3d 1.0%,#c2c23d 16.0%,#58c23d 31.0%,#58c23d 32.5%,#3dc2c2 48.2%,#3d4fc2 66.0%,#3d4fc2 66.6%,#c23dc2 83.0%,#c23d3d 98.5%,#c23d3d 100.0%)"></b><b style="top:210px;height:2px;background:linear-gradient(90deg,#c13e3e 0.0%,#c13e3e 1.0%,#c1c13e 16.0%,#58c13e 31.0%,#58c13e 32.5%,#3ec1c1 48.2%,#3e50c1 66.0%,#3e50c1 66.6%,#c13ec1 83.0%,#c13e3e 98.5%,#c13e3e 100.0%)"></b><b style="top:212px;height:2px;background:linear-gradient(90deg,#c03f3f 0.0%,#c03f3f 1.0%,#c0c03f 16.0%,#59c03f 31.0%,#59c03f 32.5%,#3fc0c0 48.2%,#3f50c0 66.0%,#3f50c0 66.6%,#c03fc0 83.0%,#c03f3f 98.5%,#c03f3f 100.0%)"></b><b style="top:214px;height:2px;background:linear-gradient(90deg,#c04040 0.0%,#c04040 1.0%,#c0c040 16.0%,#59c040 31.0%,#59c040 32.5%,#40c0c0 48.2%,#4051c0 66.0%,#4051c0 66.6%,#c040c0 83.0%,#c04040 98.5%,#c04040 100.0%)"></b><b style="top:216px;height:2px;background:linear-gradient(90deg,#bf4141 0.0%,#bf4141 1.0%,#bfbf41 16.0%,#5abf41 31.0%,#5abf41 32.5%,#41bfbf 48.2%,#4152bf 66.0%,#4152bf 66.6%,#bf41bf 83.0%,#bf4141 98.5%,#bf4141 100.0%)"></b><b style="top:218px;height:2px;background:linear-gradient(90deg,#be4242 0.0%,#be4242 1.0%,#bebe42 16.0%,#5bbe42 31.0%,#5bbe42 32.5%,#42bebe 48.2%,#4252be 66.0%,#4252be 66.6%,#be42be 83.0%,#be4242 98.5%,#be4242 100.0%)"></b><b style="top:220px;height:2px;background:linear-gradient(90deg,#bd4343 0.0%,#bd4343 1.0%,#bdbd43 16.0%,#5bbd43 31.0%,#5bbd43 32.5%,#43bdbd 48.2%,#4353bd 66.0%,#4353bd 66.6%,#bd43bd 83.0%,#bd4343 98.5%,#bd4343 100.0%)"></b><b style="top:222px;height:2px;background:linear-gradient(90deg,#bc4444 0.0%,#bc4444 1.0%,#bcbc44 16.0%,#5cbc44 31.0%,#5cbc44 32.5%,#44bcbc 48.2%,#4454bc 66.0%,#4454bc 66.6%,#bc44bc 83.0%,#bc4444 98.5%,#bc4444 100.0%)"></b><b style="top:224px;height:2px;background:linear-gradient(90deg,#bb4444 0.0%,#bb4444 1.0%,#bbbb44 16.0%,#5cbb44 31.0%,#5cbb44 32.5%,#44bbbb 48.2%,#4454bb 66.0%,#4454bb 66.6%,#bb44bb 83.0%,#bb4444 98.5%,#bb4444 100.0%)"></b><b style="top:226px;height:2px;background:linear-gradient(90deg,#ba4545 0.0%,#ba4545 1.0%,#baba45 16.0%,#5dba45 31.0%,#5dba45 32.5%,#45baba 48.2%,#4555ba 66.0%,#4555ba 66.6%,#ba45ba 83.0%,#ba4545 98.5%,#ba4545 100.0%)"></b><b style="top:228px;height:2px;background:linear-gradient(90deg,#b94646 0.0%,#b94646 1.0%,#b9b946 16.0%,#5db946 31.0%,#5db946 32.5%,#46b9b9 48.2%,#4656b9 66.0%,#4656b9 66.6%,#b946b9 83.0%,#b94646 98.5%,#b94646 100.0%)"></b><b style="top:230px;height:2px;background:linear-gradient(90deg,#b84747 0.0%,#b84747 1.0%,#b8b847 16.0%,#5eb847 31.0%,#5eb847 32.5%,#47b8b8 48.2%,#4756b8 66.0%,#4756b8 66.6%,#b847b8 83.0%,#b84747 98.5%,#b84747 100.0%)"></b><b style="top:232px;height:2px;background:linear-gradient(90deg,#b74848 0.0%,#b74848 1.0%,#b7b748 16.0%,#5eb748 31.0%,#5eb748 32.5%,#48b7b7 48.2%,#4857b7 66.0%,#4857b7 66.6%,#b748b7 83.0%,#b74848 98.5%,#b74848 100.0%)"></b><b style="top:234px;height:2px;background:linear-gradient(90deg,#b74949 0.0%,#b74949 1.0%,#b7b749 16.0%,#5fb749 31.0%,#5fb749 32.5%,#49b7b7 48.2%,#4958b7 66.0%,#4958b7 66.6%,#b749b7 83.0%,#b74949 98.5%,#b74949 100.0%)"></b><b style="top:236px;height:2px;background:linear-gradient(90deg,#b64a4a 0.0%,#b64a4a 1.0%,#b6b64a 16.0%,#5fb64a 31.0%,#5fb64a 32.5%,#4ab6b6 48.2%,#4a58b6 66.0%,#4a58b6 66.6%,#b64ab6 83.0%,#b64a4a 98.5%,#b64a4a 100.0%)"></b><b style="top:238px;height:2px;background:linear-gradient(90deg,#b54b4b 0.0%,#b54b4b 1.0%,#b5b54b 16.0%,#60b54b 31.0%,#60b54b 32.5%,#4bb5b5 48.2%,#4b59b5 66.0%,#4b59b5 66.6%,#b54bb5 83.0%,#b54b4b 98.5%,#b54b4b 100.0%)"></b><b style="top:240px;height:2px;background:linear-gradient(90deg,#b44c4c 0.0%,#b44c4c 1.0%,#b4b44c 16.0%,#61b44c 31.0%,#61b44c 32.5%,#4cb4b4 48.2%,#4c5ab4 66.0%,#4c5ab4 66.6%,#b44cb4 83.0%,#b44c4c 98.5%,#b44c4c 100.0%)"></b><b style="top:242px;height:2px;background:linear-gradient(90deg,#b34d4d 0.0%,#b34d4d 1.0%,#b3b34d 16.0%,#61b34d 31.0%,#61b34d 32.5%,#4db3b3 48.2%,#4d5ab3 66.0%,#4d5ab3 66.6%,#b34db3 83.0%,#b34d4d 98.5%,#b34d4d 100.0%)"></b><b style="top:244px;height:2px;background:linear-gradient(90deg,#b24e4e 0.0%,#b24e4e 1.0%,#b2b24e 16.0%,#62b24e 31.0%,#62b24e 32.5%,#4eb2b2 48.2%,#4e5bb2 66.0%,#4e5bb2 66.6%,#b24eb2 83.0%,#b24e4e 98.5%,#b24e4e 100.0%)"></b><b style="top:246px;height:2px;background:linear-gradient(90deg,#b14e4e 0.0%,#b14e4e 1.0%,#b1b14e 16.0%,#62b14e 31.0%,#62b14e 32.5%,#4eb1b1 48.2%,#4e5cb1 66.0%,#4e5cb1 66.6%,#b14eb1 83.0%,#b14e4e 98.5%,#b14e4e 100.0%)"></b><b style="top:248px;height:2px;background:linear-gradient(90deg,#b04f4f 0.0%,#b04f4f 1.0%,#b0b04f 16.0%,#63b04f 31.0%,#63b04f 32.5%,#4fb0b0 48.2%,#4f5cb0 66.0%,#4f5cb0 66.6%,#b04fb0 83.0%,#b04f4f 98.5%,#b04f4f 100.0%)"></b><b style="top:250px;height:2px;background:linear-gradient(90deg,#af5050 0.0%,#af5050 1.0%,#afaf50 16.0%,#63af50 31.0%,#63af50 32.5%,#50afaf 48.2%,#505daf 66.0%,#505daf 66.6%,#af50af 83.0%,#af5050 98.5%,#af5050 100.0%)"></b><b style="top:252px;height:2px;background:linear-gradient(90deg,#af5151 0.0%,#af5151 1.0%,#afaf51 16.0%,#64af51 31.0%,#64af51 32.5%,#51afaf 48.2%,#515eaf 66.0%,#515eaf 66.6%,#af51af 83.0%,#af5151 98.5%,#af5151 100.0%)"></b><b style="top:254px;height:2px;background:linear-gradient(90deg,#ae5252 0.0%,#ae5252 1.0%,#aeae52 16.0%,#64ae52 31.0%,#64ae52 32.5%,#52aeae 48.2%,#525eae 66.0%,#525eae 66.6%,#ae52ae 83.0%,#ae5252 98.5%,#ae5252 100.0%)"></b><b style="top:256px;height:2px;background:linear-gradient(90deg,#ad5353 0.0%,#ad5353 1.0%,#adad53 16.0%,#65ad53 31.0%,#65ad53 32.5%,#53adad 48.2%,#535fad 66.0%,#535fad 66.6%,#ad53ad 83.0%,#ad5353 98.5%,#ad5353 100.0%)"></b><b style="top:258px;height:2px;background:linear-gradient(90deg,#ac5454 0.0%,#ac5454 1.0%,#acac54 16.0%,#66ac54 31.0%,#66ac54 32.5%,#54acac 48.2%,#5460ac 66.0%,#5460ac 66.6%,#ac54ac 83.0%,#ac5454 98.5%,#ac5454 100.0%)"></b><b style="top:260px;height:2px;background:linear-gradient(90deg,#ab5555 0.0%,#ab5555 1.0%,#abab55 16.0%,#66ab55 31.0%,#66ab55 32.5%,#55abab 48.2%,#5561ab 66.0%,#5561ab 66.6%,#ab55ab 83.0%,#ab5555 98.5%,#ab5555 100.0%)"></b><b style="top:262px;height:2px;background:linear-gradient(90deg,#a95656 0.0%,#a95656 1.0%,#a9a956 16.0%,#67a956 31.0%,#67a956 32.5%,#56a9a9 48.2%,#5661a9 66.0%,#5661a9 66.6%,#a956a9 83.0%,#a95656 98.5%,#a95656 100.0%)"></b><b style="top:264px;height:2px;background:linear-gradient(90deg,#a85757 0.0%,#a85757 1.0%,#a8a857 16.0%,#67a857 31.0%,#67a857 32.5%,#57a8a8 48.2%,#5762a8 66.0%,#5762a8 66.6%,#a857a8 83.0%,#a85757 98.5%,#a85757 100.0%)"></b><b style="top:266px;height:2px;background:linear-gradient(90deg,#a75858 0.0%,#a75858 1.0%,#a7a758 16.0%,#68a758 31.0%,#68a758 32.5%,#58a7a7 48.2%,#5863a7 66.0%,#5863a7 66.6%,#a758a7 83.0%,#a75858 98.5%,#a75858 100.0%)"></b><b style="top:268px;height:2px;background:linear-gradient(90deg,#a65959 0.0%,#a65959 1.0%,#a6a659 16.0%,#69a659 31.0%,#69a659 32.5%,#59a6a6 48.2%,#5964a6 66.0%,#5964a6 66.6%,#a659a6 83.0%,#a65959 98.5%,#a65959 100.0%)"></b><b style="top:270px;height:2px;background:linear-gradient(90deg,#a55a5a 0.0%,#a55a5a 1.0%,#a5a55a 16.0%,#69a55a 31.0%,#69a55a 32.5%,#5aa5a5 48.2%,#5a64a5 66.0%,#5a64a5 66.6%,#a55aa5 83.0%,#a55a5a 98.5%,#a55a5a 100.0%)"></b><b style="top:272px;height:2px;background:linear-gradient(90deg,#a45b5b 0.0%,#a45b5b 1.0%,#a4a45b 16.0%,#6aa45b 31.0%,#6aa45b 32.5%,#5ba4a4 48.2%,#5b65a4 66.0%,#5b65a4 66.6%,#a45ba4 83.0%,#a45b5b 98.5%,#a45b5b 100.0%)"></b><b style="top:274px;height:2px;background:linear-gradient(90deg,#a35c5c 0.0%,#a35c5c 1.0%,#a3a35c 16.0%,#6ba35c 31.0%,#6ba35c 32.5%,#5ca3a3 48.2%,#5c66a3 66.0%,#5c66a3 66.6%,#a35ca3 83.0%,#a35c5c 98.5%,#a35c5c 100.0%)"></b><b style="top:276px;height:2px;background:linear-gradient(90deg,#a25d5d 0.0%,#a25d5d 1.0%,#a2a25d 16.0%,#6ba25d 31.0%,#6ba25d 32.5%,#5da2a2 48.2%,#5d67a2 66.0%,#5d67a2 66.6%,#a25da2 83.0%,#a25d5d 98.5%,#a25d5d 100.0%)"></b><b style="top:278px;height:2px;background:linear-gradient(90deg,#a15e5e 0.0%,#a15e5e 1.0%,#a1a15e 16.0%,#6ca15e 31.0%,#6ca15e 32.5%,#5ea1a1 48.2%,#5e67a1 66.0%,#5e67a1 66.6%,#a15ea1 83.0%,#a15e5e 98.5%,#a15e5e 100.0%)"></b><b style="top:280px;height:2px;background:linear-gradient(90deg,#a06060 0.0%,#a06060 1.0%,#a0a060 16.0%,#6ca060 31.0%,#6ca060 32.5%,#60a0a0 48.2%,#6068a0 66.0%,#6068a0 66.6%,#a060a0 83.0%,#a06060 98.5%,#a06060 100.0%)"></b><b style="top:282px;height:2px;background:linear-gradient(90deg,#9f6161 0.0%,#9f6161 1.0%,#9f9f61 16.0%,#6d9f61 31.0%,#6d9f61 32.5%,#619f9f 48.2%,#61699f 66.0%,#61699f 66.6%,#9f619f 83.0%,#9f6161 98.5%,#9f6161 100.0%)"></b><b style="top:284px;height:2px;background:linear-gradient(90deg,#9e6262 0.0%,#9e6262 1.0%,#9e9e62 16.0%,#6e9e62 31.0%,#6e9e62 32.5%,#629e9e 48.2%,#626a9e 66.0%,#626a9e 66.6%,#9e629e 83.0%,#9e6262 98.5%,#9e6262 100.0%)"></b><b style="top:286px;height:2px;background:linear-gradient(90deg,#9d6363 0.0%,#9d6363 1.0%,#9d9d63 16.0%,#6e9d63 31.0%,#6e9d63 32.5%,#639d9d 48.2%,#636a9d 66.0%,#636a9d 66.6%,#9d639d 83.0%,#9d6363 98.5%,#9d6363 100.0%)"></b><b style="top:288px;height:2px;background:linear-gradient(90deg,#9c6464 0.0%,#9c6464 1.0%,#9c9c64 16.0%,#6f9c64 31.0%,#6f9c64 32.5%,#649c9c 48.2%,#646b9c 66.0%,#646b9c 66.6%,#9c649c 83.0%,#9c6464 98.5%,#9c6464 100.0%)"></b><b style="top:290px;height:2px;background:linear-gradient(90deg,#9b6565 0.0%,#9b6565 1.0%,#9b9b65 16.0%,#709b65 31.0%,#709b65 32.5%,#659b9b 48.2%,#656c9b 66.0%,#656c9b 66.6%,#9b659b 83.0%,#9b6565 98.5%,#9b6565 100.0%)"></b><b style="top:292px;height:2px;background:linear-gradient(90deg,#9a6666 0.0%,#9a6666 1.0%,#9a9a66 16.0%,#709a66 31.0%,#709a66 32.5%,#669a9a 48.2%,#666d9a 66.0%,#666d9a 66.6%,#9a669a 83.0%,#9a6666 98.5%,#9a6666 100.0%)"></b><b style="top:294px;height:2px;background:linear-gradient(90deg,#996767 0.0%,#996767 1.0%,#999967 16.0%,#719967 31.0%,#719967 32.5%,#679999 48.2%,#676d99 66.0%,#676d99 66.6%,#996799 83.0%,#996767 98.5%,#996767 100.0%)"></b><b style="top:296px;height:2px;background:linear-gradient(90deg,#986868 0.0%,#986868 1.0%,#989868 16.0%,#719868 31.0%,#719868 32.5%,#689898 48.2%,#686e98 66.0%,#686e98 66.6%,#986898 83.0%,#986868 98.5%,#986868 100.0%)"></b><b style="top:298px;height:2px;background:linear-gradient(90deg,#976969 0.0%,#976969 1.0%,#979769 16.0%,#729769 31.0%,#729769 32.5%,#699797 48.2%,#696f97 66.0%,#696f97 66.6%,#976997 83.0%,#976969 98.5%,#976969 100.0%)"></b><b style="top:300px;height:2px;background:linear-gradient(90deg,#966a6a 0.0%,#966a6a 1.0%,#96966a 16.0%,#73966a 31.0%,#73966a 32.5%,#6a9696 48.2%,#6a7096 66.0%,#6a7096 66.6%,#966a96 83.0%,#966a6a 98.5%,#966a6a 100.0%)"></b><b style="top:302px;height:2px;background:linear-gradient(90deg,#956b6b 0.0%,#956b6b 1.0%,#95956b 16.0%,#73956b 31.0%,#73956b 32.5%,#6b9595 48.2%,#6b7095 66.0%,#6b7095 66.6%,#956b95 83.0%,#956b6b 98.5%,#956b6b 100.0%)"></b><b style="top:304px;height:2px;background:linear-gradient(90deg,#946c6c 0.0%,#946c6c 1.0%,#94946c 16.0%,#74946c 31.0%,#74946c 32.5%,#6c9494 48.2%,#6c7194 66.0%,#6c7194 66.6%,#946c94 83.0%,#946c6c 98.5%,#946c6c 100.0%)"></b><b style="top:306px;height:2px;background:linear-gradient(90deg,#936d6d 0.0%,#936d6d 1.0%,#93936d 16.0%,#75936d 31.0%,#75936d 32.5%,#6d9393 48.2%,#6d7293 66.0%,#6d7293 66.6%,#936d93 83.0%,#936d6d 98.5%,#936d6d 100.0%)"></b><b style="top:308px;height:2px;background:linear-gradient(90deg,#926e6e 0.0%,#926e6e 1.0%,#92926e 16.0%,#75926e 31.0%,#75926e 32.5%,#6e9292 48.2%,#6e7392 66.0%,#6e7392 66.6%,#926e92 83.0%,#926e6e 98.5%,#926e6e 100.0%)"></b><b style="top:310px;height:2px;background:linear-gradient(90deg,#916f6f 0.0%,#916f6f 1.0%,#91916f 16.0%,#76916f 31.0%,#76916f 32.5%,#6f9191 48.2%,#6f7491 66.0%,#6f7491 66.6%,#916f91 83.0%,#916f6f 98.5%,#916f6f 100.0%)"></b><b style="top:312px;height:2px;background:linear-gradient(90deg,#907070 0.0%,#907070 1.0%,#909070 16.0%,#769070 31.0%,#769070 32.5%,#709090 48.2%,#707490 66.0%,#707490 66.6%,#907090 83.0%,#907070 98.5%,#907070 100.0%)"></b><b style="top:314px;height:2px;background:linear-gradient(90deg,#8f7171 0.0%,#8f7171 1.0%,#8f8f71 16.0%,#778f71 31.0%,#778f71 32.5%,#718f8f 48.2%,#71758f 66.0%,#71758f 66.6%,#8f718f 83.0%,#8f7171 98.5%,#8f7171 100.0%)"></b><b style="top:316px;height:2px;background:linear-gradient(90deg,#8e7272 0.0%,#8e7272 1.0%,#8e8e72 16.0%,#788e72 31.0%,#788e72 32.5%,#728e8e 48.2%,#72768e 66.0%,#72768e 66.6%,#8e728e 83.0%,#8e7272 98.5%,#8e7272 100.0%)"></b><b style="top:318px;height:2px;background:linear-gradient(90deg,#8d7373 0.0%,#8d7373 1.0%,#8d8d73 16.0%,#788d73 31.0%,#788d73 32.5%,#738d8d 48.2%,#73768d 66.0%,#73768d 66.6%,#8d738d 83.0%,#8d7373 98.5%,#8d7373 100.0%)"></b><b style="top:320px;height:2px;background:linear-gradient(90deg,#8c7474 0.0%,#8c7474 1.0%,#8c8c74 16.0%,#798c74 31.0%,#798c74 32.5%,#748c8c 48.2%,#74778c 66.0%,#74778c 66.6%,#8c748c 83.0%,#8c7474 98.5%,#8c7474 100.0%)"></b><b style="top:322px;height:2px;background:linear-gradient(90deg,#8b7575 0.0%,#8b7575 1.0%,#8b8b75 16.0%,#798b75 31.0%,#798b75 32.5%,#758b8b 48.2%,#75788b 66.0%,#75788b 66.6%,#8b758b 83.0%,#8b7575 98.5%,#8b7575 100.0%)"></b><b style="top:324px;height:2px;background:linear-gradient(90deg,#8a7575 0.0%,#8a7575 1.0%,#8a8a75 16.0%,#7a8a75 31.0%,#7a8a75 32.5%,#758a8a 48.2%,#75788a 66.0%,#75788a 66.6%,#8a758a 83.0%,#8a7575 98.5%,#8a7575 100.0%)"></b><b style="top:326px;height:2px;background:linear-gradient(90deg,#8a7676 0.0%,#8a7676 1.0%,#8a8a76 16.0%,#7a8a76 31.0%,#7a8a76 32.5%,#768a8a 48.2%,#76798a 66.0%,#76798a 66.6%,#8a768a 83.0%,#8a7676 98.5%,#8a7676 100.0%)"></b><b style="top:328px;height:2px;background:linear-gradient(90deg,#897777 0.0%,#897777 1.0%,#898977 16.0%,#7b8977 31.0%,#7b8977 32.5%,#778989 48.2%,#777a89 66.0%,#777a89 66.6%,#897789 83.0%,#897777 98.5%,#897777 100.0%)"></b><b style="top:330px;height:2px;background:linear-gradient(90deg,#887878 0.0%,#887878 1.0%,#888878 16.0%,#7b8878 31.0%,#7b8878 32.5%,#788888 48.2%,#787a88 66.0%,#787a88 66.6%,#887888 83.0%,#887878 98.5%,#887878 100.0%)"></b><b style="top:332px;height:2px;background:linear-gradient(90deg,#877979 0.0%,#877979 1.0%,#878779 16.0%,#7c8779 31.0%,#7c8779 32.5%,#798787 48.2%,#797b87 66.0%,#797b87 66.6%,#877987 83.0%,#877979 98.5%,#877979 100.0%)"></b><b style="top:334px;height:2px;background:linear-gradient(90deg,#867a7a 0.0%,#867a7a 1.0%,#86867a 16.0%,#7c867a 31.0%,#7c867a 32.5%,#7a8686 48.2%,#7a7b86 66.0%,#7a7b86 66.6%,#867a86 83.0%,#867a7a 98.5%,#867a7a 100.0%)"></b><b style="top:336px;height:2px;background:linear-gradient(90deg,#857b7b 0.0%,#857b7b 1.0%,#85857b 16.0%,#7d857b 31.0%,#7d857b 32.5%,#7b8585 48.2%,#7b7c85 66.0%,#7b7c85 66.6%,#857b85 83.0%,#857b7b 98.5%,#857b7b 100.0%)"></b><b style="top:338px;height:2px;background:linear-gradient(90deg,#847c7c 0.0%,#847c7c 1.0%,#84847c 16.0%,#7d847c 31.0%,#7d847c 32.5%,#7c8484 48.2%,#7c7d84 66.0%,#7c7d84 66.6%,#847c84 83.0%,#847c7c 98.5%,#847c7c 100.0%)"></b><b style="top:340px;height:2px;background:linear-gradient(90deg,#837c7c 0.0%,#837c7c 1.0%,#83837c 16.0%,#7e837c 31.0%,#7e837c 32.5%,#7c8383 48.2%,#7c7d83 66.0%,#7c7d83 66.6%,#837c83 83.0%,#837c7c 98.5%,#837c7c 100.0%)"></b><b style="top:342px;height:2px;background:linear-gradient(90deg,#837d7d 0.0%,#837d7d 1.0%,#83837d 16.0%,#7e837d 31.0%,#7e837d 32.5%,#7d8383 48.2%,#7d7e83 66.0%,#7d7e83 66.6%,#837d83 83.0%,#837d7d 98.5%,#837d7d 100.0%)"></b><b style="top:344px;height:2px;background:linear-gradient(90deg,#827e7e 0.0%,#827e7e 1.0%,#82827e 16.0%,#7f827e 31.0%,#7f827e 32.5%,#7e8282 48.2%,#7e7f82 66.0%,#7e7f82 66.6%,#827e82 83.0%,#827e7e 98.5%,#827e7e 100.0%)"></b><b style="top:346px;height:2px;background:linear-gradient(90deg,#817f7f 0.0%,#817f7f 1.0%,#81817f 16.0%,#7f817f 31.0%,#7f817f 32.5%,#7f8181 48.2%,#7f7f81 66.0%,#7f7f81 66.6%,#817f81 83.0%,#817f7f 98.5%,#817f7f 100.0%)"></b><b style="top:348px;height:1px;background:linear-gradient(90deg,#808080 0.0%,#808080 1.0%,#808080 16.0%,#808080 31.0%,#808080 32.5%,#808080 48.2%,#808080 66.0%,#808080 66.6%,#808080 83.0%,#808080 98.5%,#808080 100.0%)"></b></div>
<div class="cmb" style="left:830px;top:448px;width:18px;height:18px;background:#fff"></div>
<div class="t" style="left:856.0px;top:448.9px;font-size:16px;">Zoom</div>
<div class="btn" style="left:829px;top:474px;width:72px;height:30px;"></div><div class="t" style="left:829.0px;width:72px;text-align:center;top:480.3px;font-size:16px;">Z-Out</div>
<div class="" style="left:924px;top:436px;width:263px;height:42px;background:#808080;border:2px solid #333"></div>
<div class="btn" style="left:933px;top:443px;width:58px;height:29px;"></div><div class="t" style="left:933.0px;width:58px;text-align:center;top:448.8px;font-size:16px;">Inp</div>
<div class="btn" style="left:997px;top:443px;width:59px;height:29px;"></div><div class="t" style="left:997.0px;width:59px;text-align:center;top:448.8px;font-size:16px;">I&gt;M</div>
<div class="btn" style="left:1060px;top:443px;width:59px;height:29px;"></div><div class="t" style="left:1060.0px;width:59px;text-align:center;top:448.8px;font-size:16px;">Outp</div>
<div class="btn" style="left:1124px;top:443px;width:59px;height:29px;background:#ffffd7;"></div><div class="t" style="left:1124.0px;width:59px;text-align:center;top:448.2px;font-size:17px;font-weight:bold;">O&gt;M</div>
<div class="t" style="left:945.5px;top:486.3px;font-size:15.7px;">Black Pt. Comp.</div>
<div class="cmb" style="left:1063px;top:479px;width:121px;height:30px;background:#fff;"></div><div class="t" style="left:1071.0px;top:485.3px;font-size:16px;">Both</div><div class="btn" style="left:1157px;top:481px;width:25px;height:26px;"></div><svg class="a" style="left:1164.5px;top:491.0px" width="10" height="6"><path d="M0 0H10L5 6Z"/></svg>
<div class="" style="left:829px;top:512px;width:361px;height:41px;background:#808080;border:2px solid #333"></div>
<div class="cmb" style="left:832px;top:515px;width:351px;height:34px;background:#fff;"></div><div class="t" style="left:840.0px;top:522.6px;font-size:17.3px;font-weight:bold;">xy Chromaticity (Saturation map)</div><div class="btn" style="left:1156px;top:517px;width:25px;height:30px;"></div><svg class="a" style="left:1163.5px;top:529.0px" width="10" height="6"><path d="M0 0H10L5 6Z"/></svg>
<div class="frm" style="left:830px;top:553px;width:360px;height:240px;"></div>
<div class="btn" style="left:838px;top:563px;width:119px;height:35px;"></div><div class="t" style="left:838.0px;width:119px;text-align:center;top:571.8px;font-size:16px;color:#a0a0a0;">Reset scale</div>
<div class="btn" style="left:962px;top:563px;width:116px;height:35px;"></div><div class="t" style="left:962.0px;width:116px;text-align:center;top:571.8px;font-size:16px;color:#a0a0a0;">Reset view</div>
<div class="btn" style="left:1085px;top:563px;width:99px;height:35px;"></div><div class="t" style="left:1085.0px;width:99px;text-align:center;top:571.8px;font-size:16px;color:#a0a0a0;">Top view</div>
<div class="cmb" style="left:837px;top:606px;width:19px;height:19px;background:#fff"></div>
<svg style="left:840px;top:609px" width="13" height="13"><path d="M2 6L5 10L11 2" stroke="#000" stroke-width="2.2" fill="none"/></svg>
<div class="t" style="left:863.7px;top:607.5px;font-size:16px;">Wavelth</div>
<div class="cmb" style="left:940px;top:603px;width:244px;height:29px;background:#fff;"></div><div class="t" style="left:947.0px;top:608.8px;font-size:16px;">Normal/gamut boundaries</div><div class="btn" style="left:1157px;top:605px;width:25px;height:25px;"></div><svg class="a" style="left:1164.5px;top:614.5px" width="10" height="6"><path d="M0 0H10L5 6Z"/></svg>
<div class="frm" style="left:830px;top:703px;width:130px;height:45px;"></div>
<div class="btn" style="left:837px;top:710px;width:116px;height:32px;"></div><div class="t" style="left:837.0px;width:116px;text-align:center;top:716.2px;font-size:18px;font-weight:bold;">Print Test</div>
<div class="frm" style="left:830px;top:746px;width:360px;height:47px;"></div>
<div class="sunk" style="left:837px;top:755px;width:344px;height:28px;box-shadow:inset 1px 1px #a0a0a0,inset 2px 2px #808080,inset -1px -1px #fff"></div>
<div class="t" style="left:860.0px;width:300px;text-align:center;top:761.5px;font-size:16px;">not selected</div>
<div class="frm" style="left:838px;top:798px;width:216px;height:84px;"></div>
<div class="t" style="left:854.0px;top:808.5px;font-size:17.5px;font-weight:bold;">Display A</div>
<div class="btn" style="left:975px;top:805px;width:70px;height:35px;"></div><div class="t" style="left:975.0px;width:70px;text-align:center;top:812.9px;font-size:17.7px;font-weight:bold;">View</div>
<div class="cmb" style="left:845px;top:843px;width:58px;height:29px;background:#fff;"></div><div class="t" style="left:850.0px;top:848.8px;font-size:16px;">1</div><div class="btn" style="left:876px;top:845px;width:25px;height:25px;"></div><svg class="a" style="left:883.5px;top:854.5px" width="10" height="6"><path d="M0 0H10L5 6Z"/></svg>
<div class="t" style="left:917.0px;top:849.5px;font-size:16px;">IN  OUT</div>
<div class="cmb" style="left:989px;top:845px;width:57px;height:29px;background:#fff;"></div><div class="t" style="left:994.0px;top:850.8px;font-size:16px;">3</div><div class="btn" style="left:1019px;top:847px;width:25px;height:25px;"></div><svg class="a" style="left:1026.5px;top:856.5px" width="10" height="6"><path d="M0 0H10L5 6Z"/></svg>
<div class="frm" style="left:838px;top:889px;width:216px;height:84px;"></div>
<div class="t" style="left:854.0px;top:898.4px;font-size:17.5px;font-weight:bold;">Display B</div>
<div class="btn" style="left:977px;top:895px;width:70px;height:36px;"></div><div class="t" style="left:977.0px;width:70px;text-align:center;top:903.4px;font-size:17.7px;font-weight:bold;">View</div>
<div class="cmb" style="left:845px;top:934px;width:58px;height:30px;background:#fff;"></div><div class="t" style="left:850.0px;top:940.3px;font-size:16px;">2</div><div class="btn" style="left:876px;top:936px;width:25px;height:26px;"></div><svg class="a" style="left:883.5px;top:946.0px" width="10" height="6"><path d="M0 0H10L5 6Z"/></svg>
<div class="t" style="left:916.0px;top:939.5px;font-size:16px;">IN  OUT</div>
<div class="cmb" style="left:991px;top:935px;width:56px;height:29px;background:#fff;"></div><div class="t" style="left:996.0px;top:940.8px;font-size:16px;">4</div><div class="btn" style="left:1020px;top:937px;width:25px;height:25px;"></div><svg class="a" style="left:1027.5px;top:946.5px" width="10" height="6"><path d="M0 0H10L5 6Z"/></svg>
<div class="btn" style="left:1080px;top:799px;width:104px;height:34px;"></div><div class="t" style="left:1080.0px;width:104px;text-align:center;top:807.3px;font-size:16px;">Help</div>
<div class="btn" style="left:1080px;top:847px;width:104px;height:34px;"></div><div class="t" style="left:1080.0px;width:104px;text-align:center;top:855.3px;font-size:16px;">Exit</div>
<svg style="left:1063px;top:894px" width="121" height="73" viewBox="0 0 121 73"><defs><linearGradient id="lgb" x1="0" x2="1"><stop offset="0" stop-color="#000068"/><stop offset="1" stop-color="#0000e0"/></linearGradient><linearGradient id="lgg" x1="0" x2="1"><stop offset="0" stop-color="#002800"/><stop offset=".5" stop-color="#006000"/><stop offset="1" stop-color="#008800"/></linearGradient></defs><rect width="121" height="73" fill="url(#lgb)"/><path d="M0 0H121V17Z" fill="url(#lgg)"/><path d="M0 0L121 17V27.2Z" fill="#fff"/><path d="M0 0L121 27.2V34.8Z" fill="#d03c00"/><path d="M0 0L121 34.8V38.6Z" fill="#fff"/><path d="M0 0L121 38.6V43.5Z" fill="#a820b0"/><path d="M0 0L121 43.5V46.8Z" fill="#fff"/><path d="M15 42.5C9 32 4 18 7 13C9 9 14 10 17 12L47 31.5Z" fill="#ffffc8"/><text x="61.7" y="67" text-anchor="middle" font-family="Liberation Serif" font-style="italic" font-weight="bold" font-size="21.3" fill="#fff">Gamutvision</text></svg>
<div class="t" style="left:13.0px;top:868.0px;font-size:17px;font-weight:bold;">1</div>
<div class="cmb" style="left:30px;top:864px;width:379px;height:29px;background:#ffffd2;"></div><div class="t" style="left:36.0px;top:869.8px;font-size:16px;">*sRGB   (IEC6 1996-2.1 sRGB)</div><div class="btn" style="left:382px;top:866px;width:25px;height:25px;"></div><svg class="a" style="left:389.5px;top:875.5px" width="10" height="6"><path d="M0 0H10L5 6Z"/></svg>
<div class="cmb" style="left:417px;top:864px;width:379px;height:29px;background:#f0f0f0;"></div><div class="t" style="left:423.0px;top:869.8px;font-size:16px;">Browse...</div><div class="btn" style="left:769px;top:866px;width:25px;height:25px;"></div><svg class="a" style="left:776.5px;top:875.5px" width="10" height="6"><path d="M0 0H10L5 6Z"/></svg>
<div class="t" style="left:803.0px;top:868.5px;font-size:17px;font-weight:bold;">3</div>
<div class="" style="left:30px;top:894px;width:334px;height:48px;background:#4a7fcc;border-left:2px solid #111;border-right:2px solid #111"></div>
<div class="btn" style="left:37px;top:902px;width:70px;height:36px;background:#ffffd2;"></div><div class="t" style="left:37.0px;width:70px;text-align:center;top:909.8px;font-size:17.7px;font-weight:bold;">View</div>
<div class="" style="left:37px;top:902px;width:70px;height:36px;box-shadow:inset -1px -1px #000,inset 1px 1px #fff,inset -2px -2px #808080"></div>
<div class="cmb" style="left:141px;top:902px;width:216px;height:32px;background:#ffffe8;"></div><div class="t" style="left:148.0px;top:909.3px;font-size:16px;">None (or Print Test)</div><div class="btn" style="left:330px;top:904px;width:25px;height:28px;"></div><svg class="a" style="left:337.5px;top:915.0px" width="10" height="6"><path d="M0 0H10L5 6Z"/></svg>
<div class="t" style="left:375.6px;top:909.9px;font-size:16px;">Rendering</div>
<div class="" style="left:462px;top:894px;width:333px;height:48px;background:#808080;border-left:2px solid #222;border-right:2px solid #222"></div>
<div class="cmb" style="left:468px;top:902px;width:215px;height:32px;background:#f0f0f0;"></div><div class="t" style="left:473.0px;top:909.3px;font-size:16px;">Absolute</div><div class="btn" style="left:656px;top:904px;width:25px;height:28px;"></div><svg class="a" style="left:663.5px;top:915.0px" width="10" height="6"><path d="M0 0H10L5 6Z"/></svg>
<div class="btn" style="left:719px;top:902px;width:71px;height:36px;"></div><div class="t" style="left:719.0px;width:71px;text-align:center;top:910.4px;font-size:17.7px;font-weight:bold;">View</div>
<div class="" style="left:9px;top:897px;width:18px;height:41px;background:#e0e0e0"></div>
<svg style="left:9px;top:897px" width="18" height="41"><path d="M9 1V30" stroke="#555" stroke-width="4.6"/><path d="M2.5 28H15.5L9 39Z" fill="#555"/></svg>
<div class="" style="left:800px;top:897px;width:18px;height:41px;background:#e0e0e0"></div>
<svg style="left:800px;top:897px" width="18" height="41"><path d="M9 1V30" stroke="#555" stroke-width="4.6"/><path d="M2.5 28H15.5L9 39Z" fill="#555"/></svg>
<div class="t" style="left:13.0px;top:945.6px;font-size:17px;font-weight:bold;">2</div>
<div class="cmb" style="left:30px;top:943px;width:379px;height:28px;background:#e2ffe2;"></div><div class="t" style="left:36.0px;top:948.3px;font-size:16px;">Dell S2722QC_100cd_6500K_gamma22.icm</div><div class="btn" style="left:382px;top:945px;width:25px;height:24px;"></div><svg class="a" style="left:389.5px;top:954.0px" width="10" height="6"><path d="M0 0H10L5 6Z"/></svg>
<div class="cmb" style="left:417px;top:943px;width:379px;height:28px;background:#f0f0f0;"></div><div class="t" style="left:423.0px;top:948.3px;font-size:16px;">Browse...</div><div class="btn" style="left:769px;top:945px;width:25px;height:24px;"></div><svg class="a" style="left:776.5px;top:954.0px" width="10" height="6"><path d="M0 0H10L5 6Z"/></svg>
<div class="t" style="left:803.0px;top:946.4px;font-size:17px;font-weight:bold;">4</div>
<div class="" style="left:1px;top:74px;width:1193px;height:903px;border:1px solid #fff;border-top:0"></div>
<div class="" style="left:0px;top:0px;width:1195px;height:978px;border:1px solid #1c1c1c"></div>
</body></html>
